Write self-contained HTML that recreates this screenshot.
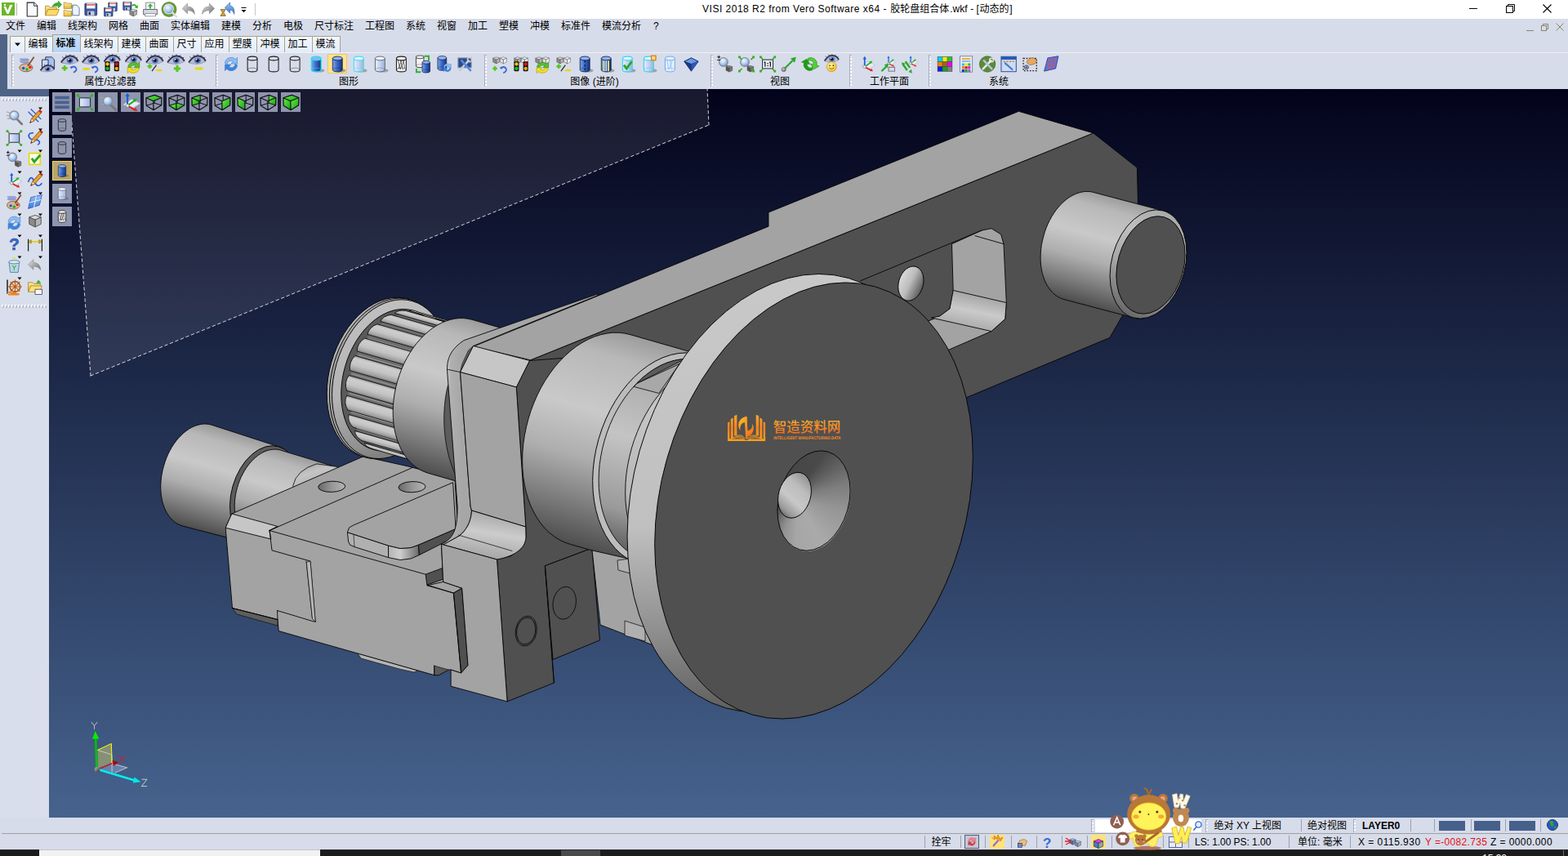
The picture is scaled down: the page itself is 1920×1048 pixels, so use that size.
<!DOCTYPE html>
<html lang="en"><head><meta charset="utf-8"><title>VISI 2018 R2</title>
<style>
*{box-sizing:border-box;margin:0;padding:0}
html,body{width:1920px;height:1048px;overflow:hidden;background:#d7dcea;font-family:"Liberation Sans","Noto Sans CJK SC",sans-serif;font-size:12px;color:#000}
.abs{position:absolute}
.lb{position:absolute;white-space:nowrap}
.lb span{vertical-align:top}
#title{position:absolute;left:0;top:0;width:1920px;height:23px;background:#fff}
#menu{position:absolute;left:0;top:23px;width:1920px;height:19px;background:#d7dcea}
#strip1{position:absolute;left:0;top:42px;width:9px;height:76px;background:#4f6386}
#strip2{position:absolute;left:0;top:109px;width:60px;height:9px;background:#4f6386}
#tb{position:absolute;left:9px;top:42px;width:1911px;height:67px;background:#d7dcea}
#view{position:absolute;left:60px;top:109px;width:1860px;height:892px;background:linear-gradient(#03031b,#46638e);overflow:hidden}
#left{position:absolute;left:0;top:118px;width:60px;height:883px;background:#d9deec}
#status{position:absolute;left:0;top:1001px;width:1920px;height:39px;background:#d7dcea}
#task{position:absolute;left:0;top:1040px;width:1920px;height:8px;background:#1c1c1c;overflow:hidden}

</style></head><body>
<div id="title"></div>
<div id="menu"></div>
<div id="tb"></div>
<div id="strip1"></div><div id="strip2"></div>
<div id="left"></div>
<div id="view"><svg id="model" class="abs" style="left:-60px;top:-109px" width="1920" height="1048" viewBox="0 0 1920 1048"><defs><linearGradient id="lg1" gradientUnits="userSpaceOnUse" x1="299.9" y1="533.4" x2="265.1" y2="654.8"><stop offset="0" stop-color="#9c9c9c"/><stop offset="0.12" stop-color="#b8b8b8"/><stop offset="0.38" stop-color="#c9c9c9"/><stop offset="0.6" stop-color="#aeaeae"/><stop offset="0.82" stop-color="#7a7a7a"/><stop offset="1" stop-color="#4e4e4e"/></linearGradient><linearGradient id="lg2" gradientUnits="userSpaceOnUse" x1="378.7" y1="561.8" x2="346.7" y2="673.3"><stop offset="0" stop-color="#9c9c9c"/><stop offset="0.12" stop-color="#b8b8b8"/><stop offset="0.38" stop-color="#c9c9c9"/><stop offset="0.6" stop-color="#aeaeae"/><stop offset="0.82" stop-color="#7a7a7a"/><stop offset="1" stop-color="#4e4e4e"/></linearGradient><linearGradient id="lg3" gradientUnits="userSpaceOnUse" x1="375.0" y1="568.0" x2="385.0" y2="600.0"><stop offset="0" stop-color="#a8a8a8"/><stop offset="0.35" stop-color="#c4c4c4"/><stop offset="1" stop-color="#b0b0b0"/></linearGradient><linearGradient id="lg4" gradientUnits="userSpaceOnUse" x1="390.2" y1="595.8" x2="422.2" y2="595.8"><stop offset="0" stop-color="#6a6a6a"/><stop offset="0.5" stop-color="#969696"/><stop offset="1" stop-color="#b4b4b4"/></linearGradient><linearGradient id="lg5" gradientUnits="userSpaceOnUse" x1="488.5" y1="596.2" x2="520.5" y2="596.2"><stop offset="0" stop-color="#6a6a6a"/><stop offset="0.5" stop-color="#969696"/><stop offset="1" stop-color="#b4b4b4"/></linearGradient><linearGradient id="lg6" gradientUnits="userSpaceOnUse" x1="475.0" y1="675.0" x2="513.0" y2="675.0"><stop offset="0" stop-color="#b4b4b4"/><stop offset="0.4" stop-color="#cdcdcd"/><stop offset="1" stop-color="#6a6a6a"/></linearGradient><linearGradient id="lg7" gradientUnits="userSpaceOnUse" x1="400.0" y1="400.0" x2="520.0" y2="560.0"><stop offset="0" stop-color="#b8b8b8"/><stop offset="0.5" stop-color="#a8a8a8"/><stop offset="1" stop-color="#6c6c6c"/></linearGradient><linearGradient id="lg8" gradientUnits="userSpaceOnUse" x1="410.0" y1="390.0" x2="520.0" y2="570.0"><stop offset="0" stop-color="#c0c0c0"/><stop offset="0.5" stop-color="#b4b4b4"/><stop offset="0.8" stop-color="#909090"/><stop offset="1" stop-color="#6a6a6a"/></linearGradient><linearGradient id="lg9" gradientUnits="userSpaceOnUse" x1="505.4" y1="380.1" x2="505.0" y2="381.5"><stop offset="0" stop-color="#a0a0a0"/><stop offset="0.15" stop-color="#cecece"/><stop offset="0.55" stop-color="#c4c4c4"/><stop offset="0.85" stop-color="#a4a4a4"/><stop offset="1" stop-color="#808080"/></linearGradient><linearGradient id="lg10" gradientUnits="userSpaceOnUse" x1="490.2" y1="378.6" x2="488.4" y2="385.0"><stop offset="0" stop-color="#a0a0a0"/><stop offset="0.15" stop-color="#cecece"/><stop offset="0.55" stop-color="#c4c4c4"/><stop offset="0.85" stop-color="#a4a4a4"/><stop offset="1" stop-color="#808080"/></linearGradient><linearGradient id="lg11" gradientUnits="userSpaceOnUse" x1="472.2" y1="383.5" x2="469.0" y2="394.4"><stop offset="0" stop-color="#a0a0a0"/><stop offset="0.15" stop-color="#cecece"/><stop offset="0.55" stop-color="#c4c4c4"/><stop offset="0.85" stop-color="#a4a4a4"/><stop offset="1" stop-color="#808080"/></linearGradient><linearGradient id="lg12" gradientUnits="userSpaceOnUse" x1="454.9" y1="395.0" x2="450.7" y2="409.6"><stop offset="0" stop-color="#a0a0a0"/><stop offset="0.15" stop-color="#cecece"/><stop offset="0.55" stop-color="#c4c4c4"/><stop offset="0.85" stop-color="#a4a4a4"/><stop offset="1" stop-color="#808080"/></linearGradient><linearGradient id="lg13" gradientUnits="userSpaceOnUse" x1="439.7" y1="412.2" x2="434.8" y2="429.3"><stop offset="0" stop-color="#a0a0a0"/><stop offset="0.15" stop-color="#cecece"/><stop offset="0.55" stop-color="#c4c4c4"/><stop offset="0.85" stop-color="#a4a4a4"/><stop offset="1" stop-color="#808080"/></linearGradient><linearGradient id="lg14" gradientUnits="userSpaceOnUse" x1="427.8" y1="433.8" x2="422.6" y2="452.0"><stop offset="0" stop-color="#a0a0a0"/><stop offset="0.15" stop-color="#cecece"/><stop offset="0.55" stop-color="#c4c4c4"/><stop offset="0.85" stop-color="#a4a4a4"/><stop offset="1" stop-color="#808080"/></linearGradient><linearGradient id="lg15" gradientUnits="userSpaceOnUse" x1="420.3" y1="457.9" x2="415.2" y2="475.7"><stop offset="0" stop-color="#a0a0a0"/><stop offset="0.15" stop-color="#cecece"/><stop offset="0.55" stop-color="#c4c4c4"/><stop offset="0.85" stop-color="#a4a4a4"/><stop offset="1" stop-color="#808080"/></linearGradient><linearGradient id="lg16" gradientUnits="userSpaceOnUse" x1="417.7" y1="482.6" x2="413.2" y2="498.5"><stop offset="0" stop-color="#a0a0a0"/><stop offset="0.15" stop-color="#cecece"/><stop offset="0.55" stop-color="#c4c4c4"/><stop offset="0.85" stop-color="#a4a4a4"/><stop offset="1" stop-color="#808080"/></linearGradient><linearGradient id="lg17" gradientUnits="userSpaceOnUse" x1="420.3" y1="505.8" x2="416.6" y2="518.7"><stop offset="0" stop-color="#a0a0a0"/><stop offset="0.15" stop-color="#cecece"/><stop offset="0.55" stop-color="#c4c4c4"/><stop offset="0.85" stop-color="#a4a4a4"/><stop offset="1" stop-color="#808080"/></linearGradient><linearGradient id="lg18" gradientUnits="userSpaceOnUse" x1="427.8" y1="525.8" x2="425.4" y2="534.5"><stop offset="0" stop-color="#a0a0a0"/><stop offset="0.15" stop-color="#cecece"/><stop offset="0.55" stop-color="#c4c4c4"/><stop offset="0.85" stop-color="#a4a4a4"/><stop offset="1" stop-color="#808080"/></linearGradient><linearGradient id="lg19" gradientUnits="userSpaceOnUse" x1="439.7" y1="540.8" x2="438.6" y2="544.6"><stop offset="0" stop-color="#a0a0a0"/><stop offset="0.15" stop-color="#cecece"/><stop offset="0.55" stop-color="#c4c4c4"/><stop offset="0.85" stop-color="#a4a4a4"/><stop offset="1" stop-color="#808080"/></linearGradient><linearGradient id="lg20" gradientUnits="userSpaceOnUse" x1="622.4" y1="404.1" x2="568.6" y2="591.9"><stop offset="0" stop-color="#9c9c9c"/><stop offset="0.12" stop-color="#b8b8b8"/><stop offset="0.38" stop-color="#c9c9c9"/><stop offset="0.6" stop-color="#aeaeae"/><stop offset="0.82" stop-color="#7a7a7a"/><stop offset="1" stop-color="#4e4e4e"/></linearGradient><linearGradient id="lg21" gradientUnits="userSpaceOnUse" x1="1180.0" y1="360.0" x2="1172.0" y2="400.0"><stop offset="0" stop-color="#a8a8a8"/><stop offset="0.45" stop-color="#cacaca"/><stop offset="1" stop-color="#a8a8a8"/></linearGradient><linearGradient id="lg22" gradientUnits="userSpaceOnUse" x1="1101.0" y1="345.0" x2="1130.0" y2="350.0"><stop offset="0" stop-color="#d8d8d8"/><stop offset="0.45" stop-color="#bcbcbc"/><stop offset="1" stop-color="#5c5c5c"/></linearGradient><linearGradient id="lg23" gradientUnits="userSpaceOnUse" x1="1381.7" y1="246.7" x2="1345.3" y2="377.8"><stop offset="0" stop-color="#9c9c9c"/><stop offset="0.12" stop-color="#b8b8b8"/><stop offset="0.38" stop-color="#c9c9c9"/><stop offset="0.6" stop-color="#aeaeae"/><stop offset="0.82" stop-color="#7a7a7a"/><stop offset="1" stop-color="#4e4e4e"/></linearGradient><linearGradient id="lg24" gradientUnits="userSpaceOnUse" x1="1424.2" y1="258.0" x2="1387.8" y2="389.0"><stop offset="0" stop-color="#a8a8a8"/><stop offset="0.3" stop-color="#c0c0c0"/><stop offset="0.6" stop-color="#a8a8a8"/><stop offset="0.85" stop-color="#808080"/><stop offset="1" stop-color="#666666"/></linearGradient><linearGradient id="lg25" gradientUnits="userSpaceOnUse" x1="546.0" y1="440.0" x2="566.0" y2="440.0"><stop offset="0" stop-color="#d0d0d0"/><stop offset="0.3" stop-color="#b0b0b0"/><stop offset="1" stop-color="#a6a6a6"/></linearGradient><linearGradient id="lg26" gradientUnits="userSpaceOnUse" x1="600.0" y1="628.0" x2="592.0" y2="682.0"><stop offset="0" stop-color="#a8a8a8"/><stop offset="0.45" stop-color="#cccccc"/><stop offset="1" stop-color="#a6a6a6"/></linearGradient><linearGradient id="lg27" gradientUnits="userSpaceOnUse" x1="814.8" y1="422.0" x2="741.3" y2="678.7"><stop offset="0" stop-color="#9c9c9c"/><stop offset="0.12" stop-color="#b8b8b8"/><stop offset="0.38" stop-color="#c9c9c9"/><stop offset="0.6" stop-color="#aeaeae"/><stop offset="0.82" stop-color="#7a7a7a"/><stop offset="1" stop-color="#4e4e4e"/></linearGradient><linearGradient id="lg28" gradientUnits="userSpaceOnUse" x1="879.1" y1="447.7" x2="809.4" y2="690.9"><stop offset="0" stop-color="#8c8c8c"/><stop offset="0.2" stop-color="#b0b0b0"/><stop offset="0.45" stop-color="#c4c4c4"/><stop offset="0.8" stop-color="#9a9a9a"/><stop offset="1" stop-color="#5a5a5a"/></linearGradient><linearGradient id="lg29" gradientUnits="userSpaceOnUse" x1="923.3" y1="447.4" x2="846.7" y2="714.6"><stop offset="0" stop-color="#a8a8a8"/><stop offset="0.3" stop-color="#c6c6c6"/><stop offset="0.7" stop-color="#b8b8b8"/><stop offset="1" stop-color="#6a6a6a"/></linearGradient><linearGradient id="lg30" gradientUnits="userSpaceOnUse" x1="800.0" y1="400.0" x2="960.0" y2="880.0"><stop offset="0" stop-color="#c8c8c8"/><stop offset="0.55" stop-color="#c0c0c0"/><stop offset="0.8" stop-color="#909090"/><stop offset="1" stop-color="#606060"/></linearGradient><linearGradient id="lg31" gradientUnits="userSpaceOnUse" x1="988.0" y1="582.0" x2="962.0" y2="634.0"><stop offset="0" stop-color="#8e8e8e"/><stop offset="0.3" stop-color="#bcbcbc"/><stop offset="0.6" stop-color="#c8c8c8"/><stop offset="0.85" stop-color="#9a9a9a"/><stop offset="1" stop-color="#5e5e5e"/></linearGradient><linearGradient id="lg32" gradientUnits="userSpaceOnUse" x1="0.0" y1="508.0" x2="0.0" y2="540.0"><stop offset="0" stop-color="#f9a825"/><stop offset="0.5" stop-color="#f58220"/><stop offset="1" stop-color="#f9a01e"/></linearGradient><linearGradient id="lg33" gradientUnits="userSpaceOnUse" x1="903.0" y1="512.0" x2="925.0" y2="534.0"><stop offset="0" stop-color="#fbb829"/><stop offset="0.5" stop-color="#f7931e"/><stop offset="1" stop-color="#f26a1c"/></linearGradient><linearGradient id="lg34" gradientUnits="userSpaceOnUse" x1="116.5" y1="940.0" x2="121.5" y2="945.0"><stop offset="0" stop-color="#a8a8a8"/><stop offset="1" stop-color="#3c3c3c"/></linearGradient></defs><polygon points="111.0,460.0 868.0,153.0 866.0,100.0 84.0,100.0" fill="#ffffff" stroke="none" stroke-width="0.9" stroke-linejoin="round" fill-opacity="0.085"/>
<polyline points="111.0,460.0 868.0,153.0" fill="none" stroke="#e8e8e8" stroke-width="0.9" stroke-linejoin="round" stroke-linecap="round" stroke-dasharray="3.5 3.5"/>
<polyline points="868.0,153.0 866.0,108.0" fill="none" stroke="#e8e8e8" stroke-width="0.9" stroke-linejoin="round" stroke-linecap="round" stroke-dasharray="3.5 3.5"/>
<polyline points="111.0,460.0 84.7,108.0" fill="none" stroke="#e8e8e8" stroke-width="0.9" stroke-linejoin="round" stroke-linecap="round" stroke-dasharray="3.5 3.5"/>
<polygon points="258.8,520.1 255.5,519.4 252.2,519.0 248.8,519.1 245.4,519.5 241.9,520.4 238.4,521.6 234.9,523.1 231.5,525.1 228.2,527.4 224.9,530.0 221.7,533.0 218.6,536.2 215.7,539.7 212.9,543.5 210.3,547.6 207.9,551.8 205.7,556.2 203.7,560.8 202.0,565.6 200.5,570.4 199.2,575.3 198.2,580.2 197.4,585.1 197.0,590.1 196.7,594.9 196.8,599.7 197.2,604.4 197.8,609.0 198.6,613.4 199.8,617.6 201.2,621.5 202.8,625.2 204.7,628.7 206.8,631.9 209.1,634.7 211.6,637.3 214.3,639.5 217.1,641.3 220.1,642.8 223.2,643.9 307.0,665.6 310.1,666.3 313.3,666.6 316.5,666.6 319.8,666.1 323.2,665.4 326.5,664.2 329.8,662.7 333.1,660.8 336.3,658.6 339.5,656.1 342.5,653.3 345.5,650.1 348.3,646.8 350.9,643.1 353.4,639.2 355.7,635.2 357.9,630.9 359.8,626.5 361.5,622.0 362.9,617.4 364.1,612.7 365.1,607.9 365.8,603.2 366.3,598.5 366.5,593.8 366.4,589.2 366.1,584.7 365.5,580.3 364.7,576.1 363.6,572.1 362.2,568.3 360.7,564.7 358.9,561.4 356.8,558.3 354.6,555.6 352.2,553.1 349.6,551.0 346.9,549.3 344.0,547.9 341.0,546.8" fill="url(#lg1)" stroke="#050505" stroke-width="0.9" stroke-linejoin="round" />
<ellipse cx="324.0" cy="606.2" rx="40.5" ry="61.8" transform="rotate(16 324.0 606.2)" fill="#5c5c5c" stroke="#050505" stroke-width="0.9" />
<polygon points="343.5,551.1 340.6,550.4 337.6,550.1 334.5,550.2 331.4,550.6 328.2,551.3 325.0,552.4 321.9,553.8 318.8,555.6 315.7,557.7 312.8,560.1 309.9,562.7 307.1,565.7 304.4,568.9 301.9,572.4 299.5,576.0 297.4,579.9 295.3,583.9 293.5,588.1 291.9,592.4 290.6,596.7 289.4,601.2 288.5,605.7 287.8,610.2 287.4,614.6 287.2,619.1 287.3,623.4 287.6,627.7 288.1,631.8 288.9,635.8 290.0,639.6 291.2,643.2 292.7,646.6 294.4,649.7 296.3,652.6 298.4,655.2 300.7,657.5 303.1,659.5 305.7,661.2 308.4,662.5 311.3,663.5 382.2,683.1 385.0,683.7 388.0,684.0 391.0,684.0 394.1,683.6 397.2,682.8 400.3,681.8 403.4,680.4 406.5,678.6 409.5,676.6 412.4,674.2 415.2,671.6 418.0,668.7 420.6,665.5 423.1,662.1 425.4,658.5 427.5,654.8 429.5,650.8 431.3,646.7 432.8,642.5 434.2,638.2 435.3,633.8 436.2,629.4 436.9,625.0 437.3,620.6 437.5,616.2 437.5,612.0 437.1,607.8 436.6,603.7 435.8,599.8 434.8,596.1 433.6,592.5 432.1,589.2 430.4,586.1 428.6,583.3 426.5,580.7 424.3,578.4 421.9,576.5 419.3,574.8 416.6,573.5 413.8,572.5" fill="url(#lg2)" stroke="#050505" stroke-width="0.9" stroke-linejoin="round" />
<path d="M358.7,594.5 Q363,575 387.9,567.9 L411.9,571.3 L425,580 L362,598 Z" fill="url(#lg3)" stroke="#050505" stroke-width="0.8" stroke-linejoin="round" stroke-linecap="round" />
<polygon points="284.5,744.5 290.0,752.0 340.0,766.0 340.0,758.5" fill="#5e5e5e" stroke="#050505" stroke-width="0.6" stroke-linejoin="round" />
<polygon points="438.0,800.0 442.0,806.0 489.0,819.0 507.0,823.0 512.0,821.0" fill="#b4b4b4" stroke="#050505" stroke-width="0.6" stroke-linejoin="round" />
<polygon points="283.8,629.0 445.0,558.8 500.0,571.0 557.0,586.0 561.0,652.0 542.5,667.0 540.5,666.3 542.7,712.4 565.7,720.1 573.0,814.5 564.6,824.0 552.1,820.0 549.3,820.0 537.2,826.6 531.7,826.6 341.2,772.5 340.0,758.5 284.5,744.5 276.2,646.2" fill="#a3a3a3" stroke="#050505" stroke-width="0.9" stroke-linejoin="round" />
<polygon points="283.8,629.0 340.0,644.5 330.0,649.5 331.8,660.0 276.2,646.2" fill="#c6c6c6" stroke="#050505" stroke-width="0.9" stroke-linejoin="round" />
<polyline points="330.0,649.5 505.0,572.5" fill="none" stroke="#050505" stroke-width="0.9" stroke-linejoin="round" stroke-linecap="round" />
<polyline points="340.0,644.5 330.0,649.5" fill="none" stroke="#050505" stroke-width="0.9" stroke-linejoin="round" stroke-linecap="round" />
<polyline points="330.0,649.5 521.1,703.2" fill="none" stroke="#050505" stroke-width="0.9" stroke-linejoin="round" stroke-linecap="round" />
<polyline points="330.0,649.5 333.0,673.8 380.0,687.0 386.2,761.2" fill="none" stroke="#050505" stroke-width="0.9" stroke-linejoin="round" stroke-linecap="round" />
<polyline points="375.0,687.0 382.5,757.5 386.2,761.2" fill="none" stroke="#050505" stroke-width="0.9" stroke-linejoin="round" stroke-linecap="round" />
<polyline points="339.5,747.5 385.0,761.2" fill="none" stroke="#050505" stroke-width="0.9" stroke-linejoin="round" stroke-linecap="round" />
<polyline points="339.5,747.5 340.0,758.5" fill="none" stroke="#050505" stroke-width="0.9" stroke-linejoin="round" stroke-linecap="round" />
<polygon points="375.3,688.5 380.0,687.0 386.2,761.2 382.5,757.5" fill="#b8b8b8" stroke="#050505" stroke-width="0.6" stroke-linejoin="round" />
<polyline points="284.5,744.5 340.0,758.5" fill="none" stroke="#050505" stroke-width="0.9" stroke-linejoin="round" stroke-linecap="round" />
<ellipse cx="406.2" cy="595.8" rx="16.5" ry="6.6" transform="rotate(-2 406.2 595.8)" fill="url(#lg4)" stroke="#050505" stroke-width="0.9"/>
<ellipse cx="504.5" cy="596.2" rx="16.5" ry="6.6" transform="rotate(-2 504.5 596.2)" fill="url(#lg5)" stroke="#050505" stroke-width="0.9"/>
<polygon points="425.4,651.7 475.6,668.0 475.6,682.6 434.0,669.5 428.5,667.0 426.6,663.0" fill="#b0b0b0" stroke="#050505" stroke-width="0.9" stroke-linejoin="round" />
<polygon points="475.6,668.0 490.0,671.5 503.0,670.5 512.5,667.1 513.4,679.5 503.0,684.0 490.0,685.5 475.6,682.6" fill="url(#lg6)" stroke="#050505" stroke-width="0.9" stroke-linejoin="round" />
<polygon points="512.5,667.1 558.1,647.4 561.5,655.1 513.4,679.5" fill="#505050" stroke="#050505" stroke-width="0.9" stroke-linejoin="round" />
<polyline points="433.0,655.0 434.0,669.5" fill="none" stroke="#050505" stroke-width="0.6" stroke-linejoin="round" stroke-linecap="round" />
<polygon points="554.6,590.7 432.6,643.1 427.5,646.0 425.4,651.7 475.6,668.0 490.0,671.5 503.0,670.5 512.5,667.1 558.1,647.4" fill="#a3a3a3" stroke="#050505" stroke-width="0.9" stroke-linejoin="round" />
<polygon points="521.1,703.2 541.8,695.5 542.6,709.2 522.9,716.1" fill="#505050" stroke="#050505" stroke-width="0.9" stroke-linejoin="round" />
<polygon points="522.9,716.8 542.7,712.4 565.7,720.1 555.4,726.1" fill="#a3a3a3" stroke="#050505" stroke-width="0.9" stroke-linejoin="round" />
<polygon points="555.4,726.1 565.7,720.1 573.0,814.5 564.6,824.0" fill="#505050" stroke="#050505" stroke-width="0.9" stroke-linejoin="round" />
<polyline points="555.4,726.1 564.6,824.0" fill="none" stroke="#050505" stroke-width="0.9" stroke-linejoin="round" stroke-linecap="round" />
<polyline points="522.9,716.1 555.4,726.1" fill="none" stroke="#050505" stroke-width="0.9" stroke-linejoin="round" stroke-linecap="round" />
<polygon points="531.7,815.0 549.3,820.0 537.2,826.6 531.7,826.6" fill="#5a5a5a" stroke="#050505" stroke-width="0.6" stroke-linejoin="round" />
<polyline points="531.7,815.0 531.7,826.6" fill="none" stroke="#050505" stroke-width="0.9" stroke-linejoin="round" stroke-linecap="round" />
<ellipse cx="472.0" cy="462.6" rx="68.9" ry="100.4" transform="rotate(16 472.0 462.6)" fill="url(#lg7)" stroke="#050505" stroke-width="0.9" />
<ellipse cx="475.2" cy="463.5" rx="68.9" ry="100.4" transform="rotate(16 475.2 463.5)" fill="#a4a4a4" stroke="#050505" stroke-width="0.9" />
<ellipse cx="477.6" cy="464.2" rx="68.2" ry="99.4" transform="rotate(16 477.6 464.2)" fill="url(#lg8)" stroke="#050505" stroke-width="0.9" />
<ellipse cx="481.0" cy="465.2" rx="60.7" ry="88.5" transform="rotate(16 481.0 465.2)" fill="#5a5a5a" stroke="#050505" stroke-width="0.9" />
<polygon points="508.8,386.3 504.4,385.3 499.9,384.8 495.3,384.8 490.7,385.3 486.0,386.4 481.3,387.9 476.7,389.9 472.1,392.3 467.5,395.3 463.1,398.6 458.9,402.4 454.8,406.6 450.9,411.2 447.2,416.1 443.7,421.3 440.6,426.7 437.6,432.5 435.0,438.4 432.7,444.5 430.7,450.8 429.1,457.1 427.8,463.5 426.9,469.9 426.3,476.3 426.1,482.7 426.3,488.9 426.8,495.0 427.7,501.0 429.0,506.7 430.6,512.2 432.5,517.3 434.8,522.2 437.4,526.7 440.3,530.9 443.5,534.7 446.9,538.0 450.6,540.9 454.5,543.4 458.5,545.3 462.8,546.8 540.7,569.2 536.4,567.7 532.3,565.7 528.4,563.2 524.8,560.3 521.3,557.0 518.2,553.2 515.3,549.1 512.7,544.5 510.4,539.7 508.5,534.5 506.9,529.0 505.6,523.3 504.7,517.4 504.2,511.3 504.0,505.0 504.2,498.7 504.8,492.3 505.7,485.8 507.0,479.4 508.6,473.1 510.6,466.8 512.9,460.7 515.5,454.8 518.4,449.1 521.6,443.6 525.1,438.4 528.7,433.5 532.7,428.9 536.7,424.8 541.0,421.0 545.4,417.6 549.9,414.7 554.5,412.2 559.2,410.2 563.9,408.7 568.5,407.7 573.2,407.2 577.8,407.1 582.3,407.6 586.7,408.6" fill="#6e6e6e" stroke="none" stroke-width="0.9" stroke-linejoin="round" />
<path d="M512.1,382.0 Q503.8,378.5 501.4,380.4 L577.3,402.2 L588.1,403.8 Z" fill="url(#lg9)" stroke="#050505" stroke-width="0.8" stroke-linejoin="round" stroke-linecap="round" />
<polyline points="500.6,383.9 574.6,405.1" fill="none" stroke="#b0b0b0" stroke-width="0.7" stroke-linejoin="round" stroke-linecap="round" />
<path d="M497.0,380.5 Q486.9,379.1 483.4,383.6 L559.3,405.3 L572.9,402.3 Z" fill="url(#lg10)" stroke="#050505" stroke-width="0.8" stroke-linejoin="round" stroke-linecap="round" />
<polyline points="483.1,387.9 557.2,409.1" fill="none" stroke="#b0b0b0" stroke-width="0.7" stroke-linejoin="round" stroke-linecap="round" />
<path d="M478.9,385.4 Q468.6,386.7 465.8,393.5 L541.7,415.3 L554.8,407.2 Z" fill="url(#lg11)" stroke="#050505" stroke-width="0.8" stroke-linejoin="round" stroke-linecap="round" />
<polyline points="466.3,398.3 540.3,419.5" fill="none" stroke="#b0b0b0" stroke-width="0.7" stroke-linejoin="round" stroke-linecap="round" />
<path d="M461.6,396.9 Q451.7,400.7 449.9,409.4 L525.9,431.2 L537.5,418.7 Z" fill="url(#lg12)" stroke="#050505" stroke-width="0.8" stroke-linejoin="round" stroke-linecap="round" />
<polyline points="451.3,414.4 525.3,435.6" fill="none" stroke="#b0b0b0" stroke-width="0.7" stroke-linejoin="round" stroke-linecap="round" />
<path d="M446.4,414.2 Q437.3,420.1 437.1,430.0 L513.1,451.8 L522.3,436.0 Z" fill="url(#lg13)" stroke="#050505" stroke-width="0.8" stroke-linejoin="round" stroke-linecap="round" />
<polyline points="439.4,434.8 513.4,456.0" fill="none" stroke="#b0b0b0" stroke-width="0.7" stroke-linejoin="round" stroke-linecap="round" />
<path d="M434.6,435.7 Q426.9,443.2 428.5,453.7 L504.4,475.4 L510.5,457.5 Z" fill="url(#lg14)" stroke="#050505" stroke-width="0.8" stroke-linejoin="round" stroke-linecap="round" />
<polyline points="431.6,457.8 505.6,479.1" fill="none" stroke="#b0b0b0" stroke-width="0.7" stroke-linejoin="round" stroke-linecap="round" />
<path d="M427.0,459.8 Q421.1,468.2 424.6,478.4 L500.6,500.2 L503.0,481.6 Z" fill="url(#lg15)" stroke="#050505" stroke-width="0.8" stroke-linejoin="round" stroke-linecap="round" />
<polyline points="428.6,481.7 502.6,503.0" fill="none" stroke="#b0b0b0" stroke-width="0.7" stroke-linejoin="round" stroke-linecap="round" />
<path d="M424.5,484.5 Q420.4,493.0 425.9,502.2 L501.9,524.0 L500.4,506.3 Z" fill="url(#lg16)" stroke="#050505" stroke-width="0.8" stroke-linejoin="round" stroke-linecap="round" />
<polyline points="430.5,504.5 504.5,525.7" fill="none" stroke="#b0b0b0" stroke-width="0.7" stroke-linejoin="round" stroke-linecap="round" />
<path d="M427.1,507.8 Q425.0,515.6 432.3,523.2 L508.2,544.9 L503.0,529.6 Z" fill="url(#lg17)" stroke="#050505" stroke-width="0.8" stroke-linejoin="round" stroke-linecap="round" />
<polyline points="437.2,524.2 511.2,545.4" fill="none" stroke="#b0b0b0" stroke-width="0.7" stroke-linejoin="round" stroke-linecap="round" />
<path d="M434.6,527.7 Q434.4,534.2 443.1,539.6 L519.0,561.3 L510.5,549.5 Z" fill="url(#lg18)" stroke="#050505" stroke-width="0.8" stroke-linejoin="round" stroke-linecap="round" />
<polyline points="448.2,539.4 522.2,560.6" fill="none" stroke="#b0b0b0" stroke-width="0.7" stroke-linejoin="round" stroke-linecap="round" />
<path d="M446.4,542.8 Q447.8,547.3 457.6,550.1 L533.5,571.8 L522.4,564.6 Z" fill="url(#lg19)" stroke="#050505" stroke-width="0.8" stroke-linejoin="round" stroke-linecap="round" />
<polyline points="462.6,548.7 536.6,569.9" fill="none" stroke="#b0b0b0" stroke-width="0.7" stroke-linejoin="round" stroke-linecap="round" />
<polygon points="577.9,391.3 572.8,390.2 567.5,389.6 562.1,389.6 556.7,390.2 551.2,391.4 545.7,393.2 540.3,395.5 534.9,398.4 529.6,401.8 524.5,405.8 519.5,410.2 514.7,415.1 510.1,420.4 505.8,426.2 501.8,432.2 498.0,438.7 494.6,445.4 491.6,452.3 488.9,459.5 486.6,466.8 484.7,474.2 483.2,481.7 482.1,489.2 481.4,496.7 481.2,504.1 481.4,511.4 482.0,518.6 483.0,525.5 484.5,532.2 486.4,538.6 488.7,544.7 491.3,550.4 494.4,555.7 497.8,560.5 501.5,565.0 505.5,568.9 509.8,572.3 514.3,575.1 519.1,577.4 524.1,579.2 613.1,604.7 618.2,605.9 623.5,606.4 628.9,606.4 634.3,605.8 639.8,604.6 645.3,602.8 650.7,600.5 656.1,597.6 661.4,594.2 666.5,590.2 671.5,585.8 676.3,580.9 680.9,575.6 685.2,569.9 689.2,563.8 693.0,557.4 696.4,550.7 699.4,543.7 702.1,536.6 704.4,529.2 706.3,521.8 707.8,514.3 708.9,506.8 709.6,499.3 709.8,491.9 709.6,484.6 709.0,477.5 708.0,470.5 706.5,463.8 704.6,457.4 702.3,451.4 699.7,445.7 696.6,440.4 693.2,435.5 689.5,431.1 685.5,427.2 681.2,423.8 676.7,420.9 671.9,418.6 666.9,416.9" fill="url(#lg20)" stroke="#050505" stroke-width="0.9" stroke-linejoin="round" />
<path d="M548.6,471.7 C541,500 541,545 557.8,581.6 L566,585 L560,470 Z" fill="#5c5c5c" stroke="#050505" stroke-width="0.8" stroke-linejoin="round" stroke-linecap="round" />
<polygon points="649.7,440.8 1338.8,162.9 1392.4,205.3 1396.0,349.0 1358.9,413.4 1100.0,521.6 900.0,600.0 642.0,642.0 631.0,475.0" fill="#505050" stroke="#050505" stroke-width="0.9" stroke-linejoin="round" />
<polygon points="1247.4,136.3 1338.8,162.9 649.7,440.8 579.5,424.3 941.0,277.2 941.0,260.0" fill="#a3a3a3" stroke="#050505" stroke-width="0.9" stroke-linejoin="round" />
<polygon points="1165.5,298.7 1202.3,282.0 1214.0,279.7 1225.7,287.0 1229.0,298.7 1232.3,370.5 1230.7,390.6 1214.0,405.6 1163.9,427.3 1100.0,455.0 1100.0,405.0 1138.8,392.2 1150.5,387.2 1163.0,378.0 1167.2,355.5" fill="#a3a3a3" stroke="#050505" stroke-width="0.9" stroke-linejoin="round" />
<polygon points="1167.2,355.5 1232.3,370.5 1230.7,390.6 1214.0,405.6 1140.5,389.0 1150.5,387.2 1163.0,378.0" fill="url(#lg21)" stroke="#050505" stroke-width="0.9" stroke-linejoin="round" />
<polyline points="1194.0,288.7 1229.0,298.7" fill="none" stroke="#050505" stroke-width="0.9" stroke-linejoin="round" stroke-linecap="round" />
<polyline points="1053.6,343.8 1202.3,282.0" fill="none" stroke="#050505" stroke-width="0.9" stroke-linejoin="round" stroke-linecap="round" />
<ellipse cx="1115.4" cy="347.1" rx="15.0" ry="21.5" transform="rotate(16 1115.4 347.1)" fill="url(#lg22)" stroke="#050505" stroke-width="0.9" />
<polygon points="1339.2,235.5 1335.7,234.7 1332.2,234.4 1328.6,234.5 1324.9,235.0 1321.2,235.9 1317.6,237.2 1313.9,238.9 1310.3,240.9 1306.7,243.4 1303.3,246.2 1299.9,249.3 1296.7,252.8 1293.6,256.5 1290.7,260.6 1288.0,264.8 1285.5,269.3 1283.2,274.0 1281.1,278.9 1279.3,283.9 1277.8,289.0 1276.5,294.2 1275.4,299.4 1274.7,304.6 1274.3,309.8 1274.1,315.0 1274.2,320.1 1274.6,325.0 1275.3,329.8 1276.3,334.4 1277.6,338.9 1279.1,343.0 1280.9,347.0 1282.9,350.6 1285.2,353.9 1287.7,356.9 1290.4,359.6 1293.2,361.9 1296.3,363.8 1299.5,365.4 1302.8,366.5 1387.8,389.0 1391.3,389.8 1394.8,390.1 1398.4,390.0 1402.1,389.5 1405.8,388.6 1409.4,387.3 1413.1,385.6 1416.7,383.6 1420.3,381.1 1423.7,378.3 1427.1,375.2 1430.3,371.7 1433.4,368.0 1436.3,363.9 1439.0,359.7 1441.5,355.2 1443.8,350.5 1445.9,345.6 1447.7,340.6 1449.2,335.5 1450.5,330.3 1451.6,325.1 1452.3,319.9 1452.7,314.7 1452.9,309.5 1452.8,304.4 1452.4,299.5 1451.7,294.7 1450.7,290.1 1449.4,285.6 1447.9,281.5 1446.1,277.5 1444.1,273.9 1441.8,270.6 1439.3,267.6 1436.6,264.9 1433.8,262.6 1430.7,260.7 1427.5,259.1 1424.2,258.0" fill="url(#lg23)" stroke="#050505" stroke-width="0.9" stroke-linejoin="round" />
<ellipse cx="1406.0" cy="323.5" rx="44.9" ry="68.0" transform="rotate(15.5 1406.0 323.5)" fill="url(#lg24)" stroke="#050505" stroke-width="0.9" />
<ellipse cx="1409.0" cy="324.5" rx="40.3" ry="61.0" transform="rotate(15.5 1409.0 324.5)" fill="#505050" stroke="#050505" stroke-width="0.9" />
<polygon points="648.5,441.5 632.3,474.0 643.8,645.0 644.0,658.0 638.0,672.0 625.0,681.0 608.5,685.0 621.1,858.9 678.4,836.0 667.4,692.7 721.2,672.5 800.0,640.0 800.0,430.0" fill="#505050" stroke="#050505" stroke-width="0.9" stroke-linejoin="round" />
<polygon points="667.4,692.7 721.2,672.5 725.0,672.5 734.5,783.8 677.0,807.5" fill="#505050" stroke="#050505" stroke-width="0.9" stroke-linejoin="round" />
<polyline points="667.4,692.7 678.4,836.0" fill="none" stroke="#050505" stroke-width="0.9" stroke-linejoin="round" stroke-linecap="round" />
<ellipse cx="644.2" cy="772.5" rx="12.9" ry="18.5" transform="rotate(10 644.2 772.5)" fill="none" stroke="#050505" stroke-width="0.8" />
<ellipse cx="644.2" cy="772.5" rx="11.5" ry="16.5" transform="rotate(10 644.2 772.5)" fill="none" stroke="#050505" stroke-width="0.8" />
<ellipse cx="691.2" cy="738.2" rx="14.0" ry="20.0" transform="rotate(10 691.2 738.2)" fill="none" stroke="#050505" stroke-width="0.8" />
<path d="M547.5,452.2 C547.5,440 551,428 568.1,416.7 L733,359.6 L731,362 L579.6,423.5 L563.5,455.6 L576.1,620 L577.5,625 C577,640 570,650 562.5,656 L542.5,667 L540.5,666.3 C553,660 560.5,652 560.1,620.1 Z" fill="url(#lg25)" stroke="#050505" stroke-width="0.9" stroke-linejoin="round" stroke-linecap="round" />
<polyline points="547.5,452.2 563.5,455.6" fill="none" stroke="#050505" stroke-width="0.8" stroke-linejoin="round" stroke-linecap="round" />
<polygon points="563.5,455.6 579.6,423.5 573.5,429.0 565.8,446.0" fill="#606060" stroke="#050505" stroke-width="0.6" stroke-linejoin="round" />
<polygon points="579.6,423.5 648.5,441.5 632.3,474.0 563.5,455.6" fill="#c6c6c6" stroke="#050505" stroke-width="0.9" stroke-linejoin="round" />
<polygon points="563.5,455.6 632.3,474.0 643.8,645.0 577.5,625.0 576.1,620.0" fill="#a3a3a3" stroke="#050505" stroke-width="0.9" stroke-linejoin="round" />
<path d="M577.5,625 L643.75,645 L644,658 C643,672 630,681 608.5,685 L540.5,666.3 L542.5,667 L562.5,656 C570,650 577,640 577.5,625 Z" fill="url(#lg26)" stroke="#050505" stroke-width="0.9" stroke-linejoin="round" stroke-linecap="round" />
<polyline points="561.5,655.1 627.0,674.5" fill="none" stroke="#050505" stroke-width="0.7" stroke-linejoin="round" stroke-linecap="round" />
<polygon points="540.5,666.3 608.5,685.0 621.1,858.9 552.1,840.2 552.1,820.0 564.6,824.0 573.0,814.5 565.7,720.1 542.7,712.4" fill="#a3a3a3" stroke="#050505" stroke-width="0.9" stroke-linejoin="round" />
<polygon points="771.8,409.7 764.8,408.1 757.6,407.3 750.2,407.3 742.8,408.2 735.3,409.8 727.8,412.2 720.4,415.4 713.0,419.4 705.8,424.0 698.8,429.4 692.0,435.5 685.4,442.2 679.2,449.4 673.3,457.3 667.7,465.6 662.6,474.4 658.0,483.5 653.8,493.0 650.1,502.8 647.0,512.8 644.4,522.9 642.3,533.2 640.8,543.4 639.9,553.7 639.6,563.8 639.9,573.8 640.7,583.5 642.2,593.0 644.2,602.2 646.7,610.9 649.8,619.2 653.5,627.0 657.6,634.2 662.2,640.9 667.3,646.9 672.8,652.3 678.7,656.9 684.9,660.8 691.4,664.0 698.2,666.3 784.3,691.0 791.3,692.6 798.5,693.4 805.9,693.4 813.3,692.6 820.8,690.9 828.3,688.5 835.7,685.3 843.1,681.4 850.3,676.7 857.3,671.3 864.1,665.2 870.7,658.6 876.9,651.3 882.8,643.5 888.4,635.1 893.5,626.4 898.1,617.2 902.3,607.7 906.0,597.9 909.1,587.9 911.7,577.8 913.8,567.6 915.3,557.3 916.2,547.1 916.5,536.9 916.2,526.9 915.4,517.2 913.9,507.7 911.9,498.6 909.4,489.8 906.3,481.5 902.6,473.7 898.5,466.5 893.9,459.8 888.8,453.8 883.3,448.5 877.4,443.8 871.2,439.9 864.7,436.8 857.9,434.4" fill="url(#lg27)" stroke="#050505" stroke-width="0.9" stroke-linejoin="round" />
<ellipse cx="821.1" cy="562.7" rx="91.6" ry="133.5" transform="rotate(16 821.1 562.7)" fill="#bcbcbc" stroke="#050505" stroke-width="0.9" />
<polygon points="858.4,441.8 851.7,440.3 844.9,439.5 837.9,439.6 830.9,440.4 823.8,441.9 816.7,444.2 809.6,447.2 802.7,451.0 795.8,455.4 789.2,460.5 782.7,466.2 776.5,472.6 770.6,479.5 765.0,486.9 759.8,494.8 754.9,503.1 750.5,511.7 746.6,520.7 743.1,530.0 740.1,539.5 737.6,549.1 735.7,558.8 734.2,568.5 733.4,578.2 733.1,587.8 733.3,597.3 734.2,606.5 735.5,615.5 737.4,624.2 739.9,632.5 742.8,640.3 746.3,647.7 750.2,654.6 754.6,660.9 759.4,666.6 764.6,671.6 770.1,676.0 776.0,679.8 782.2,682.7 788.6,685.0 830.1,696.9 836.8,698.4 843.6,699.1 850.6,699.1 857.6,698.3 864.7,696.8 871.8,694.5 878.9,691.5 885.8,687.7 892.7,683.3 899.3,678.2 905.8,672.5 912.0,666.1 917.9,659.2 923.5,651.8 928.7,643.9 933.6,635.6 938.0,626.9 941.9,617.9 945.4,608.7 948.4,599.2 950.9,589.6 952.8,579.9 954.3,570.2 955.1,560.5 955.4,550.9 955.2,541.4 954.3,532.2 953.0,523.2 951.1,514.5 948.6,506.2 945.7,498.4 942.2,491.0 938.3,484.1 933.9,477.8 929.1,472.1 923.9,467.0 918.4,462.6 912.5,458.9 906.3,455.9 899.9,453.7" fill="url(#lg28)" stroke="#050505" stroke-width="0.9" stroke-linejoin="round" />
<polygon points="780.1,469.4 780.6,468.3 782.7,466.2 784.8,464.3 787.0,462.3 789.2,460.5 791.4,458.7 793.6,457.0 795.8,455.4 798.1,453.8 800.4,452.4 802.7,451.0 805.0,449.6 807.3,448.4 809.6,447.2 812.0,446.1 814.3,445.1 816.7,444.2 819.1,443.3 821.4,442.6 823.8,441.9 826.2,441.3 828.5,440.8 830.9,440.4 833.2,440.0 835.6,439.7 837.9,439.6 840.3,439.5 842.6,439.5 844.9,439.5 847.2,439.7 849.5,440.0 851.7,440.3 854.0,440.7 856.2,441.2 858.4,441.8 834.9,441.4" fill="#5c5c5c" stroke="#050505" stroke-width="0.8" stroke-linejoin="round" />
<polygon points="780.1,469.4 832.0,445.5 806.8,481.5 776.1,473.4" fill="#a8a8a8" stroke="#050505" stroke-width="0.8" stroke-linejoin="round" />
<polygon points="903.3,441.7 896.0,440.0 888.5,439.2 880.9,439.2 873.1,440.1 865.3,441.8 857.5,444.3 849.8,447.6 842.1,451.7 834.6,456.6 827.3,462.2 820.2,468.5 813.4,475.5 806.9,483.1 800.7,491.2 795.0,499.9 789.7,509.0 784.8,518.5 780.5,528.4 776.6,538.6 773.3,549.0 770.6,559.6 768.5,570.2 766.9,580.9 766.0,591.6 765.7,602.1 765.9,612.5 766.8,622.7 768.3,632.6 770.4,642.1 773.1,651.2 776.3,659.8 780.1,667.9 784.4,675.5 789.2,682.4 794.5,688.7 800.2,694.2 806.3,699.1 812.8,703.2 819.6,706.4 826.7,708.9 866.7,720.4 874.0,722.0 881.5,722.8 889.1,722.8 896.9,722.0 904.7,720.3 912.5,717.7 920.2,714.4 927.9,710.3 935.4,705.4 942.7,699.8 949.8,693.5 956.6,686.6 963.1,679.0 969.3,670.8 975.0,662.2 980.3,653.0 985.2,643.5 989.5,633.6 993.4,623.4 996.7,613.0 999.4,602.5 1001.5,591.8 1003.1,581.1 1004.0,570.5 1004.3,559.9 1004.1,549.5 1003.2,539.4 1001.7,529.5 999.6,520.0 996.9,510.9 993.7,502.2 989.9,494.1 985.6,486.6 980.8,479.6 975.5,473.4 969.8,467.8 963.7,463.0 957.2,458.9 950.4,455.6 943.3,453.1" fill="url(#lg29)" stroke="#050505" stroke-width="0.9" stroke-linejoin="round" />
<polygon points="725.0,673.8 768.8,683.8 900.0,700.0 900.0,800.0 800.0,790.0 735.0,765.0" fill="#a3a3a3" stroke="#050505" stroke-width="0.9" stroke-linejoin="round" />
<polygon points="756.0,686.0 771.0,684.0 772.0,702.0 757.0,698.0" fill="#b0b0b0" stroke="#050505" stroke-width="0.7" stroke-linejoin="round" />
<polygon points="765.0,760.0 790.0,768.0 790.0,785.0 765.0,778.0" fill="#b0b0b0" stroke="#050505" stroke-width="0.7" stroke-linejoin="round" />
<ellipse cx="963.7" cy="603.6" rx="187.8" ry="273.7" transform="rotate(16 963.7 603.6)" fill="url(#lg30)" stroke="#050505" stroke-width="0.9" />
<ellipse cx="996.5" cy="613.0" rx="187.0" ry="272.6" transform="rotate(16 996.5 613.0)" fill="#505050" stroke="#050505" stroke-width="0.9" />
<path d="M891.0,517.5 L893.4,516.2 L893.4,539.4 L891.0,539.4 Z M934.7,516.2 L937.1,517.5 L937.1,539.4 L934.7,539.4 Z M894.8,513.0 L897.7,511.6 L897.7,537.0 L894.8,537.0 Z M930.4,511.6 L933.3,513.0 L933.3,537.0 L930.4,537.0 Z M899.0,509.3 L902.4,507.8 L902.4,533.6 L899.0,533.6 Z M925.7,507.8 L929.1,509.3 L929.1,533.6 L925.7,533.6 Z " fill="url(#lg32)"/>
<path d="M891,537.6 L906,537.6 Q911,537 914,539 Q917,537 922,537.6 L937.1,537.6 L937.1,540 L891,540 Z" fill="url(#lg32)"/>
<path d="M893.5,537.8 Q905,533.5 910.5,538 M897.8,536 Q906,531.5 911.5,537.5 M902.4,533.6 Q908,531 912.5,537 M934.6,537.8 Q923,533.5 917.6,538 M930.3,536 Q922,531.5 916.6,537.5 M925.7,533.6 Q920,531 915.6,537" fill="none" stroke="url(#lg32)" stroke-width="0.9"/>
<path d="M914.6,509.8 C905,511 901.5,520 906.5,527.5 C905.5,521 908.5,517.5 912,517.3 L913.3,537.5 L915.8,537.5 L914.6,509.8 Z" fill="url(#lg33)"/>
<path d="M914.9,527.6 C919.5,527 922.3,523.5 920.6,518.6 C925,523.5 922.5,533 915.3,534.6 Z" fill="url(#lg33)"/>
<path d="M122.7,942.1 L137.2,934.8 L155.8,939.8 L140.8,946.2 Z" fill="#9ab0d8" fill-opacity="0.45"/>
<path d="M137.2,934.8 L155.8,939.8 L140.8,946.2" fill="none" stroke="#d8d8d8" stroke-width="0.8"/>
<path d="M119.5,918.3 L136.3,910.4 L137.2,933.9 L119.5,941 Z" fill="#b4b46a" fill-opacity="0.6"/>
<path d="M119.5,918.3 L136.7,924 L137.2,945.7" fill="none" stroke="#d8d8d8" stroke-width="0.8"/>
<path d="M119.5,918.3 L136.3,910.4 L137.2,933.9" fill="none" stroke="#ffff00" stroke-width="1"/>
<path d="M122.7,940.6 L139,933.9" stroke="#d81010" stroke-width="1.8" stroke-dasharray="2 0.8"/>
<path d="M145,933 L137.4,931 L139.4,937.8 Z" fill="#b00000"/>
<path d="M118.2,939 L117.2,904" stroke="#00c000" stroke-width="2.6"/>
<path d="M116.6,895.1 L113,904.8 L121.3,904.4 Z" fill="#00f000"/>
<path d="M121.8,942.5 L166,955.8" stroke="#00f0f0" stroke-width="2.6"/>
<path d="M172.6,957.2 L164.6,951.6 L162.8,958.6 Z" fill="#00e8e8"/>
<circle cx="119" cy="942.3" r="3.2" fill="url(#lg34)"/>
<path d="M111.9,884 L115.5,888.6 L119.2,884 M115.5,888.6 V892.8" fill="none" stroke="#d0d0d0" stroke-width="0.9"/>
<path d="M145,925 L153,934 M153,925 L145,934" fill="none" stroke="#f01010" stroke-width="0.9"/>
<path d="M173.5,954.2 H180 L173.3,962.6 H180" fill="none" stroke="#d8d8d8" stroke-width="0.9"/></svg><div class="abs" style="left:893.7px;top:441.6px;width:85.6px;height:124.8px;border-radius:50%;transform:rotate(16deg);background:conic-gradient(from -16deg at 21.7% 50.6%,#474747 0deg,#494949 34deg,#606060 54deg,#7e7e7e 78deg,#969696 108deg,#aaaaaa 150deg,#a6a6a6 178deg,#929292 197deg,#727272 212deg,#565656 226deg,#494949 245deg,#474747 360deg)"></div><svg class="abs" style="left:-60px;top:-109px" width="1920" height="1048" viewBox="0 0 1920 1048"><ellipse cx="996.5" cy="613.0" rx="42.8" ry="62.4" transform="rotate(16 996.5 613.0)" fill="none" stroke="#050505" stroke-width="0.9" />
<ellipse cx="973.0" cy="606.3" rx="19.6" ry="28.5" transform="rotate(16 973.0 606.3)" fill="url(#lg31)" stroke="#050505" stroke-width="0.9" /></svg></div>
<div id="status"></div>
<div id="task"><div class="abs" style="left:48px;top:0;width:344px;height:8px;background:#f2f2f2"></div><div class="abs" style="left:687px;top:0;width:48px;height:8px;background:#4a4a4a"></div><div class="abs" style="left:0;top:0;width:1920px;height:1px;background:#2a2a2a"></div><div class="abs" style="left:48px;top:0;width:344px;height:1px;background:#c4c4c4"></div><div class="abs" style="left:1914px;top:1px;width:1px;height:7px;background:#6a6a6a"></div><div class="lb" style="left:1815px;top:5px;color:#fff;font-size:12px;line-height:12px">15:32</div></div>
<div class="abs" style="left:20px;top:4px;width:1px;height:15px;background:#b8b8b8"></div>
<div class="abs" style="left:312px;top:4px;width:1px;height:15px;background:#c8c8c8"></div>
<div class="lb" style="left:860.1px;top:4px;font-size:12px;line-height:14px;color:#000;letter-spacing:0.498px;">VISI&nbsp;2018&nbsp;R2&nbsp;from&nbsp;Vero&nbsp;Software&nbsp;x64&nbsp;-&nbsp;</div>
<div class="lb " style="left:1090.2px;top:5.2px;font-size:12px;line-height:12px;color:#000;"><span>胶轮盘组合体</span></div>
<div class="lb" style="left:1163.2px;top:4px;font-size:12px;line-height:14px;color:#000;letter-spacing:0.061px;">.wkf&nbsp;-&nbsp;[</div>
<div class="lb " style="left:1199.6px;top:5.2px;font-size:12px;line-height:12px;color:#000;"><span>动态的</span></div>
<div class="lb" style="left:1236.2px;top:4px;font-size:12px;line-height:14px;color:#000;letter-spacing:0.672px;">]</div>
<div class="lb " style="left:7px;top:26.3px;font-size:12px;line-height:12px;color:#000;"><span>文件</span></div>
<div class="lb " style="left:45px;top:26.3px;font-size:12px;line-height:12px;color:#000;"><span>编辑</span></div>
<div class="lb " style="left:83px;top:26.3px;font-size:12px;line-height:12px;color:#000;"><span>线架构</span></div>
<div class="lb " style="left:133px;top:26.3px;font-size:12px;line-height:12px;color:#000;"><span>网格</span></div>
<div class="lb " style="left:171px;top:26.3px;font-size:12px;line-height:12px;color:#000;"><span>曲面</span></div>
<div class="lb " style="left:209px;top:26.3px;font-size:12px;line-height:12px;color:#000;"><span>实体编辑</span></div>
<div class="lb " style="left:271px;top:26.3px;font-size:12px;line-height:12px;color:#000;"><span>建模</span></div>
<div class="lb " style="left:309px;top:26.3px;font-size:12px;line-height:12px;color:#000;"><span>分析</span></div>
<div class="lb " style="left:347px;top:26.3px;font-size:12px;line-height:12px;color:#000;"><span>电极</span></div>
<div class="lb " style="left:385px;top:26.3px;font-size:12px;line-height:12px;color:#000;"><span>尺寸标注</span></div>
<div class="lb " style="left:447px;top:26.3px;font-size:12px;line-height:12px;color:#000;"><span>工程图</span></div>
<div class="lb " style="left:497px;top:26.3px;font-size:12px;line-height:12px;color:#000;"><span>系统</span></div>
<div class="lb " style="left:535px;top:26.3px;font-size:12px;line-height:12px;color:#000;"><span>视窗</span></div>
<div class="lb " style="left:573px;top:26.3px;font-size:12px;line-height:12px;color:#000;"><span>加工</span></div>
<div class="lb " style="left:611px;top:26.3px;font-size:12px;line-height:12px;color:#000;"><span>塑模</span></div>
<div class="lb " style="left:649px;top:26.3px;font-size:12px;line-height:12px;color:#000;"><span>冲模</span></div>
<div class="lb " style="left:687px;top:26.3px;font-size:12px;line-height:12px;color:#000;"><span>标准件</span></div>
<div class="lb " style="left:737px;top:26.3px;font-size:12px;line-height:12px;color:#000;"><span>模流分析</span></div>
<div class="lb " style="left:800px;top:26px;font-size:12px;line-height:12px;color:#000;"><span>?</span></div>
<div class="abs" style="left:12px;top:44px;width:19px;height:20px;background:linear-gradient(#f3f7fd,#e3ecf9);border:1px solid #a6a38e;border-bottom:none"></div>
<div class="abs" style="left:30px;top:44px;width:35px;height:20px;background:linear-gradient(#f3f7fd,#e3ecf9);border:1px solid #a6a38e;border-bottom:none"></div>
<div class="lb " style="left:34.6px;top:47.5px;font-size:12px;line-height:12px;color:#000;"><span>编辑</span></div>
<div class="abs" style="left:64px;top:42px;width:35px;height:22px;background:linear-gradient(#c9dff8,#b6d3f5);border:1px solid #a6a38e;border-bottom:none"></div>
<div class="lb " style="left:68.6px;top:46.5px;font-size:12px;line-height:12px;color:#000;font-weight:bold;"><span>标准</span></div>
<div class="abs" style="left:98px;top:44px;width:47px;height:20px;background:linear-gradient(#f3f7fd,#e3ecf9);border:1px solid #a6a38e;border-bottom:none"></div>
<div class="lb " style="left:102.6px;top:47.5px;font-size:12px;line-height:12px;color:#000;"><span>线架构</span></div>
<div class="abs" style="left:144px;top:44px;width:35px;height:20px;background:linear-gradient(#f3f7fd,#e3ecf9);border:1px solid #a6a38e;border-bottom:none"></div>
<div class="lb " style="left:148.6px;top:47.5px;font-size:12px;line-height:12px;color:#000;"><span>建模</span></div>
<div class="abs" style="left:178px;top:44px;width:35px;height:20px;background:linear-gradient(#f3f7fd,#e3ecf9);border:1px solid #a6a38e;border-bottom:none"></div>
<div class="lb " style="left:182.6px;top:47.5px;font-size:12px;line-height:12px;color:#000;"><span>曲面</span></div>
<div class="abs" style="left:212px;top:44px;width:35px;height:20px;background:linear-gradient(#f3f7fd,#e3ecf9);border:1px solid #a6a38e;border-bottom:none"></div>
<div class="lb " style="left:216.6px;top:47.5px;font-size:12px;line-height:12px;color:#000;"><span>尺寸</span></div>
<div class="abs" style="left:246px;top:44px;width:35px;height:20px;background:linear-gradient(#f3f7fd,#e3ecf9);border:1px solid #a6a38e;border-bottom:none"></div>
<div class="lb " style="left:250.6px;top:47.5px;font-size:12px;line-height:12px;color:#000;"><span>应用</span></div>
<div class="abs" style="left:280px;top:44px;width:35px;height:20px;background:linear-gradient(#f3f7fd,#e3ecf9);border:1px solid #a6a38e;border-bottom:none"></div>
<div class="lb " style="left:284.6px;top:47.5px;font-size:12px;line-height:12px;color:#000;"><span>塑膜</span></div>
<div class="abs" style="left:314px;top:44px;width:35px;height:20px;background:linear-gradient(#f3f7fd,#e3ecf9);border:1px solid #a6a38e;border-bottom:none"></div>
<div class="lb " style="left:318.6px;top:47.5px;font-size:12px;line-height:12px;color:#000;"><span>冲模</span></div>
<div class="abs" style="left:348px;top:44px;width:35px;height:20px;background:linear-gradient(#f3f7fd,#e3ecf9);border:1px solid #a6a38e;border-bottom:none"></div>
<div class="lb " style="left:352.6px;top:47.5px;font-size:12px;line-height:12px;color:#000;"><span>加工</span></div>
<div class="abs" style="left:382px;top:44px;width:35px;height:20px;background:linear-gradient(#f3f7fd,#e3ecf9);border:1px solid #a6a38e;border-bottom:none"></div>
<div class="lb " style="left:386.6px;top:47.5px;font-size:12px;line-height:12px;color:#000;"><span>模流</span></div>
<div class="abs" style="left:9px;top:64px;width:1911px;height:1px;background:#eef1f8"></div>
<div class="abs" style="left:13.5px;top:67px;width:3px;height:39px;background:repeating-linear-gradient(#fff 0 2px,transparent 2px 4px);box-shadow:1px 1px 0 #a8acbc inset"></div>
<div class="lb " style="left:103.45px;top:94.3px;font-size:12px;line-height:12px;color:#000;"><span>属性/过滤器</span></div>
<div class="abs" style="left:263.5px;top:67px;width:3px;height:39px;background:repeating-linear-gradient(#fff 0 2px,transparent 2px 4px);box-shadow:1px 1px 0 #a8acbc inset"></div>
<div class="abs" style="left:400.75px;top:66px;width:24px;height:24px;background:#ffe48c;border:1px solid #e8c76a"></div>
<div class="lb " style="left:415px;top:94.3px;font-size:12px;line-height:12px;color:#000;"><span>图形</span></div>
<div class="abs" style="left:592.5px;top:67px;width:3px;height:39px;background:repeating-linear-gradient(#fff 0 2px,transparent 2px 4px);box-shadow:1px 1px 0 #a8acbc inset"></div>
<div class="lb " style="left:698.3px;top:94.3px;font-size:12px;line-height:12px;color:#000;"><span>图像 (进阶)</span></div>
<div class="abs" style="left:869.5px;top:67px;width:3px;height:39px;background:repeating-linear-gradient(#fff 0 2px,transparent 2px 4px);box-shadow:1px 1px 0 #a8acbc inset"></div>
<div class="lb " style="left:943px;top:94.3px;font-size:12px;line-height:12px;color:#000;"><span>视图</span></div>
<div class="abs" style="left:1039.5px;top:67px;width:3px;height:39px;background:repeating-linear-gradient(#fff 0 2px,transparent 2px 4px);box-shadow:1px 1px 0 #a8acbc inset"></div>
<div class="lb " style="left:1065px;top:94.3px;font-size:12px;line-height:12px;color:#000;"><span>工作平面</span></div>
<div class="abs" style="left:1136.5px;top:67px;width:3px;height:39px;background:repeating-linear-gradient(#fff 0 2px,transparent 2px 4px);box-shadow:1px 1px 0 #a8acbc inset"></div>
<div class="lb " style="left:1211px;top:94.3px;font-size:12px;line-height:12px;color:#000;"><span>系统</span></div>
<div class="abs" style="left:2px;top:120px;width:56px;height:3px;background:repeating-linear-gradient(90deg,#fff 0 2px,transparent 2px 4px)"></div>
<div class="abs" style="left:3px;top:121px;width:56px;height:3px;background:repeating-linear-gradient(90deg,#a4a8b8 0 2px,transparent 2px 4px);opacity:.6"></div>
<div class="abs" style="left:2px;top:373px;width:56px;height:3px;background:repeating-linear-gradient(90deg,#fff 0 2px,transparent 2px 4px)"></div>
<div class="abs" style="left:3px;top:374px;width:56px;height:3px;background:repeating-linear-gradient(90deg,#a4a8b8 0 2px,transparent 2px 4px);opacity:.6"></div>
<div class="abs" style="left:64px;top:113px;width:24px;height:24px;background:#8e95ae"></div>
<div class="abs" style="left:92px;top:113px;width:24px;height:24px;background:#8e95ae"></div>
<div class="abs" style="left:120px;top:113px;width:24px;height:24px;background:#8e95ae"></div>
<div class="abs" style="left:148px;top:113px;width:24px;height:24px;background:#8e95ae"></div>
<div class="abs" style="left:176px;top:113px;width:24px;height:24px;background:#8e95ae"></div>
<div class="abs" style="left:204px;top:113px;width:24px;height:24px;background:#8e95ae"></div>
<div class="abs" style="left:232px;top:113px;width:24px;height:24px;background:#8e95ae"></div>
<div class="abs" style="left:260px;top:113px;width:24px;height:24px;background:#8e95ae"></div>
<div class="abs" style="left:288px;top:113px;width:24px;height:24px;background:#8e95ae"></div>
<div class="abs" style="left:316px;top:113px;width:24px;height:24px;background:#8e95ae"></div>
<div class="abs" style="left:344px;top:113px;width:24px;height:24px;background:#8e95ae"></div>
<div class="abs" style="left:64px;top:141px;width:24px;height:24px;background:#8e95ae"></div>
<div class="abs" style="left:64px;top:169px;width:24px;height:24px;background:#8e95ae"></div>
<div class="abs" style="left:64px;top:197px;width:24px;height:24px;background:#b8a56a;border:1px solid #ecd27e"></div>
<div class="abs" style="left:64px;top:225px;width:24px;height:24px;background:#8e95ae"></div>
<div class="abs" style="left:64px;top:253px;width:24px;height:24px;background:#8e95ae"></div>
<div class="abs" style="left:2px;top:1020px;width:1918px;height:1px;background:#a0a0a0"></div>
<div class="abs" style="left:1341px;top:1003px;width:130px;height:16px;background:#fff"></div>
<div class="abs" style="left:1336px;top:1003px;width:3px;height:16px;background:repeating-linear-gradient(#fff 0 2px,transparent 2px 4px);box-shadow:1px 1px 0 #a8acbc inset"></div>
<div class="abs" style="left:1476px;top:1003px;width:3px;height:16px;background:repeating-linear-gradient(#fff 0 2px,transparent 2px 4px);box-shadow:1px 1px 0 #a8acbc inset"></div>
<div class="abs" style="left:1657px;top:1003px;width:3px;height:16px;background:repeating-linear-gradient(#fff 0 2px,transparent 2px 4px);box-shadow:1px 1px 0 #a8acbc inset"></div>
<div class="lb " style="left:1486.6px;top:1005px;font-size:12px;line-height:12px;color:#000;"><span>绝对 XY 上视图</span></div>
<div class="lb " style="left:1601px;top:1005px;font-size:12px;line-height:12px;color:#000;"><span>绝对视图</span></div>
<div class="lb" style="left:1668px;top:1004px;font-size:12px;line-height:14px;color:#000;letter-spacing:0.008px;font-weight:bold;">LAYER0</div>
<div class="abs" style="left:1592.5px;top:1003px;width:1px;height:15px;background:#9aa0b0"></div>
<div class="abs" style="left:1727px;top:1003px;width:1px;height:15px;background:#9aa0b0"></div>
<div class="abs" style="left:1755.5px;top:1003px;width:1px;height:15px;background:#9aa0b0"></div>
<div class="abs" style="left:1800.5px;top:1003px;width:1px;height:15px;background:#9aa0b0"></div>
<div class="abs" style="left:1843px;top:1003px;width:1px;height:15px;background:#9aa0b0"></div>
<div class="abs" style="left:1886px;top:1003px;width:1px;height:15px;background:#9aa0b0"></div>
<div class="abs" style="left:1762px;top:1004.5px;width:32px;height:12px;background:#46608c"></div>
<div class="abs" style="left:1805px;top:1004.5px;width:32px;height:12px;background:#46608c"></div>
<div class="abs" style="left:1848px;top:1004.5px;width:32px;height:12px;background:#46608c"></div>
<div class="abs" style="left:1132px;top:1023px;width:1px;height:15px;background:#9aa0b0"></div>
<div class="abs" style="left:1176px;top:1023px;width:1px;height:15px;background:#9aa0b0"></div>
<div class="abs" style="left:1205.5px;top:1023px;width:1px;height:15px;background:#9aa0b0"></div>
<div class="abs" style="left:1237.5px;top:1023px;width:1px;height:15px;background:#9aa0b0"></div>
<div class="abs" style="left:1268.7px;top:1023px;width:1px;height:15px;background:#9aa0b0"></div>
<div class="abs" style="left:1299.5px;top:1023px;width:1px;height:15px;background:#9aa0b0"></div>
<div class="abs" style="left:1330.7px;top:1023px;width:1px;height:15px;background:#9aa0b0"></div>
<div class="abs" style="left:1361.4px;top:1023px;width:1px;height:15px;background:#9aa0b0"></div>
<div class="abs" style="left:1423.8px;top:1023px;width:1px;height:15px;background:#9aa0b0"></div>
<div class="abs" style="left:1455.4px;top:1023px;width:1px;height:15px;background:#9aa0b0"></div>
<div class="abs" style="left:1578.4px;top:1023px;width:1px;height:15px;background:#9aa0b0"></div>
<div class="abs" style="left:1653.2px;top:1023px;width:1px;height:15px;background:#9aa0b0"></div>
<div class="lb " style="left:1140.6px;top:1025px;font-size:12px;line-height:12px;color:#000;"><span>拴牢</span></div>
<div class="lb" style="left:1463px;top:1024px;font-size:12px;line-height:14px;color:#000;letter-spacing:-0.047px;">LS:&nbsp;1.00&nbsp;PS:&nbsp;1.00</div>
<div class="lb " style="left:1589px;top:1025px;font-size:12px;line-height:12px;color:#000;"><span>单位: 毫米</span></div>
<div class="lb" style="left:1663px;top:1024px;font-size:12px;line-height:14px;color:#000;letter-spacing:0.474px;">X&nbsp;=&nbsp;0115.930</div>
<div class="lb" style="left:1745px;top:1024px;font-size:12px;line-height:14px;color:#e81010;letter-spacing:0.320px;">Y&nbsp;=-0082.735</div>
<div class="lb" style="left:1825px;top:1024px;font-size:12px;line-height:14px;color:#000;letter-spacing:0.414px;">Z&nbsp;=&nbsp;0000.000</div>
<div class="abs" style="left:1212px;top:1022px;width:18px;height:17px;background:#ffe27a"></div>
<div class="abs" style="left:1336px;top:1022px;width:18px;height:17px;background:#ffe27a"></div>
<svg class="abs" style="left:0;top:0;pointer-events:none" width="1920" height="1048" viewBox="0 0 1920 1048"><defs>
<linearGradient id="icb" x1="0" x2="1" y1="0" y2="0"><stop offset="0" stop-color="#7fa8e8"/><stop offset="0.45" stop-color="#3b6cc8"/><stop offset="1" stop-color="#16327e"/></linearGradient>
<linearGradient id="icl" x1="0" x2="1" y1="0" y2="0"><stop offset="0" stop-color="#e8eefc"/><stop offset="0.5" stop-color="#c4d2f0"/><stop offset="1" stop-color="#9fb2dc"/></linearGradient>
<linearGradient id="icg" x1="0" x2="0" y1="0" y2="1"><stop offset="0" stop-color="#7be04a"/><stop offset="1" stop-color="#1f9a16"/></linearGradient>
<linearGradient id="icy" x1="0" x2="0" y1="0" y2="1"><stop offset="0" stop-color="#fff27a"/><stop offset="1" stop-color="#e0b400"/></linearGradient>
<linearGradient id="icbl" x1="0" x2="0" y1="0" y2="1"><stop offset="0" stop-color="#9cc4f4"/><stop offset="1" stop-color="#3a78d0"/></linearGradient>
<linearGradient id="icgr" x1="0" x2="1" y1="0" y2="1"><stop offset="0" stop-color="#e4e4e4"/><stop offset="1" stop-color="#6e6e6e"/></linearGradient>
<radialGradient id="iceye" cx="0.5" cy="0.5" r="0.5"><stop offset="0" stop-color="#10204a"/><stop offset="0.45" stop-color="#3a5a9a"/><stop offset="1" stop-color="#7f9acc"/></radialGradient>
<radialGradient id="icglass" cx="0.4" cy="0.35" r="0.7"><stop offset="0" stop-color="#f4faff"/><stop offset="0.6" stop-color="#a8c8f0"/><stop offset="1" stop-color="#5a86c8"/></radialGradient>
<radialGradient id="icsm" cx="0.4" cy="0.35" r="0.7"><stop offset="0" stop-color="#fff6a0"/><stop offset="1" stop-color="#f0b818"/></radialGradient>
<linearGradient id="icfold" x1="0" x2="0" y1="0" y2="1"><stop offset="0" stop-color="#ffe89a"/><stop offset="1" stop-color="#e8b83a"/></linearGradient>
<linearGradient id="icgcube" x1="0" x2="1" y1="0" y2="1"><stop offset="0" stop-color="#6af04a"/><stop offset="1" stop-color="#14a010"/></linearGradient>
</defs><g transform="translate(10 11) scale(1)"><rect x="-8" y="-8" width="16" height="16" fill="#6cb52d"/><path d="M-5.5,-3 l4,9 h2 l5,-11 h-3.4 l-2.8,7 l-2,-5z" fill="#fff"/><circle cx="-4" cy="-5" r="1.2" fill="#fff"/></g>
<g transform="translate(39.5 11.5) scale(1.05)"><path d="M-6,-8 h8 l4,4 v12 h-12z" fill="#f8faff" stroke="#222" stroke-width="1"/><path d="M2,-8 v4 h4" fill="#dfe6f6" stroke="#222" stroke-width="0.8"/></g>
<g transform="translate(64 11.5) scale(1.05)"><path d="M-8,7 v-11 h4 l1.5,1.6 h7.5 v3" fill="url(#icfold)" stroke="#a07818" stroke-width="0.7"/><path d="M-8,7 l3,-7 h13 l-3,7z" fill="#ffd968" stroke="#a07818" stroke-width="0.7"/><path d="M0,-3 q2,-5 7,-4.5 v-2.5 l4,4.5 l-4,4 v-2.5 q-4,-0.5 -7,1z" fill="#3cb030" stroke="#1a7a14" stroke-width="0.5"/></g>
<g transform="translate(87.6 11.5) scale(1.05)"><path d="M-9,-1 v-7 h3 l1,1 h5 v6z" fill="url(#icfold)" stroke="#a07818" stroke-width="0.6"/><path d="M-9,8 v-7 h3 l1,1 h5 v6z" fill="url(#icfold)" stroke="#a07818" stroke-width="0.6"/><path d="M1,-5 h5 l3,3 v9 h-8z" fill="#eef3ff" stroke="#3a4a6a" stroke-width="0.7"/><path d="M-1,-3 h3 M-1,5 h3" stroke="#48b838" stroke-width="1"/></g>
<g transform="translate(111.3 11.5) scale(1.05)"><g transform="translate(0 0) scale(1)"><rect x="-7" y="-7" width="14" height="14" rx="1" fill="#3a5a9e" stroke="#1c2c5c" stroke-width="0.8"/><rect x="-5" y="-7" width="10" height="6" fill="#f4f4f4"/><rect x="-5" y="-6" width="10" height="1.3" fill="#e04040"/><rect x="-4" y="2" width="8" height="5" fill="#c8ccd8"/><rect x="-2.6" y="3" width="2.2" height="3.4" fill="#1c2c5c"/></g></g>
<g transform="translate(135.4 11.5) scale(1.05)"><g transform="translate(2.5 -3) scale(0.72)"><rect x="-7" y="-7" width="14" height="14" rx="1" fill="#3a5a9e" stroke="#1c2c5c" stroke-width="0.8"/><rect x="-5" y="-7" width="10" height="6" fill="#f4f4f4"/><rect x="-5" y="-6" width="10" height="1.3" fill="#e04040"/><rect x="-4" y="2" width="8" height="5" fill="#c8ccd8"/><rect x="-2.6" y="3" width="2.2" height="3.4" fill="#1c2c5c"/></g><g transform="translate(-2.5 3) scale(0.72)"><rect x="-7" y="-7" width="14" height="14" rx="1" fill="#3a5a9e" stroke="#1c2c5c" stroke-width="0.8"/><rect x="-5" y="-7" width="10" height="6" fill="#f4f4f4"/><rect x="-5" y="-6" width="10" height="1.3" fill="#e04040"/><rect x="-4" y="2" width="8" height="5" fill="#c8ccd8"/><rect x="-2.6" y="3" width="2.2" height="3.4" fill="#1c2c5c"/></g></g>
<g transform="translate(159 11.5) scale(1.05)"><g transform="translate(-3 -4) scale(0.7)"><rect x="-7" y="-7" width="14" height="14" rx="1" fill="#3a5a9e" stroke="#1c2c5c" stroke-width="0.8"/><rect x="-5" y="-7" width="10" height="6" fill="#f4f4f4"/><rect x="-5" y="-6" width="10" height="1.3" fill="#e04040"/><rect x="-4" y="2" width="8" height="5" fill="#c8ccd8"/><rect x="-2.6" y="3" width="2.2" height="3.4" fill="#1c2c5c"/></g><g transform="translate(4 7) scale(0.7)"><path d="M0,-6 l6,-2.5 l0,7 l-6,3z" fill="#b4b4b4" stroke="#444" stroke-width="0.7"/><path d="M-6,-8.5 l6,2.5 v7.5 l-6,-3z" fill="#8c8c8c" stroke="#444" stroke-width="0.7"/><path d="M-6,-8.5 l6,-2 l6,2 l-6,2.5z" fill="#dcdcdc" stroke="#444" stroke-width="0.7"/></g><path d="M2,-5 q4,-3 6,1 l1.6,-1 l-0.6,4 l-3.6,-1.2 l1.4,-0.8 q-1.6,-2.4 -4,-0.6z" fill="#38b030"/></g>
<g transform="translate(184 11.5) scale(1.05)"><rect x="-5" y="-8" width="10" height="8" fill="#f8f8f8" stroke="#667" stroke-width="0.7"/><path d="M0,-7 l3,3.4 h-2 v2.6 h-2 v-2.6 h-2z" fill="#30b838"/><path d="M-8,0 h16 v6 h-16z" fill="#d4d8e0" stroke="#556" stroke-width="0.8"/><rect x="-6" y="5" width="12" height="3" fill="#fff" stroke="#667" stroke-width="0.6"/></g>
<g transform="translate(207 11.5) scale(1.05)"><circle cx="0" cy="0" r="9" fill="#6a9a3c"/><circle cx="-0.5" cy="-0.5" r="5.6" fill="url(#icglass)" stroke="#e8e8e8" stroke-width="1"/><path d="M4,4 l4.5,4.5" stroke="#ddd" stroke-width="2.4" stroke-linecap="round"/></g>
<g transform="translate(231.6 11.5) scale(1.05)"><path d="M-8,-1 l6,-6 v3.6 q8,0 8.5,9 q-2.5,-4.6 -8.5,-4.4 v3.8z" fill="url(#icgr)" stroke="#8a8a8a" stroke-width="0.6"/></g>
<g transform="translate(254.3 11.5) scale(1.05)"><path d="M8,-1 l-6,-6 v3.6 q-8,0 -8.5,9 q2.5,-4.6 8.5,-4.4 v3.8z" fill="url(#icgr)" stroke="#8a8a8a" stroke-width="0.6"/></g>
<g transform="translate(278.4 11.5) scale(1.05)"><path d="M-3,-2 l6,-6 v3.6 q6,1 5,10 q-1.5,-5 -5,-5 v3.8z" fill="url(#icbl)" stroke="#2a5aa8" stroke-width="0.6"/><path d="M-8,0 h6 l-2.2,3.6 l2.2,4 h-6 l2.2,-4z" fill="#c8a040" stroke="#6a5010" stroke-width="0.6"/></g>
<path d="M295.5,9.5 h6" stroke="#000" stroke-width="1"/><path d="M295.5,12 h6 l-3,3.2z" fill="#000"/>
<path d="M1799,10.5 h10" stroke="#000" stroke-width="1"/>
<rect x="1844.5" y="7.5" width="8" height="8" fill="#fff" stroke="#000" stroke-width="1"/><path d="M1846.5,7.5 v-2 h8 v8 h-2" fill="none" stroke="#000" stroke-width="1"/>
<path d="M1889.5,5.5 l10,10 M1899.5,5.5 l-10,10" stroke="#000" stroke-width="1.1"/>
<path d="M1869,37.5 h9" stroke="#8a846c" stroke-width="1"/>
<rect x="1887.5" y="31.5" width="6" height="6" fill="none" stroke="#8a846c" stroke-width="1"/><path d="M1889.5,31.5 v-2 h6 v6 h-2" fill="none" stroke="#8a846c" stroke-width="1"/>
<path d="M1905.5,28.5 l9,9 M1914.5,28.5 l-9,9" stroke="#8a846c" stroke-width="1"/>
<path d="M18,52.5 h7 l-3.5,4z" fill="#000"/>
<g transform="translate(33 78.5) scale(1.08)"><path d="M-8,-6 h9 l1.5,1.5 h-9z M-8,-3.4 h9 l1.5,1.5 h-9z" fill="#a8b4e8" stroke="#5868b0" stroke-width="0.5"/><ellipse cx="-1" cy="4" rx="7.5" ry="4.6" fill="#d8b890" stroke="#6a4a2a" stroke-width="0.7"/><circle cx="-4" cy="4.6" r="1.6" fill="#2050e0"/><circle cx="0" cy="6" r="1.6" fill="#20b030"/><circle cx="3.6" cy="3.4" r="1.6" fill="#e02020"/><path d="M1,2 l7,-10" stroke="#8a4a1a" stroke-width="1.6"/></g>
<g transform="translate(59.05 78.5) scale(1.08)"><path d="M-3,-8 h7 l3,3 v10 h-10z" fill="#a8c0f0" stroke="#223" stroke-width="0.8"/><path d="M-7,-5 h7 v9 h-7z" fill="#c8d8f8" stroke="#223" stroke-width="0.8"/><g transform="translate(-1 6) scale(0.78)"><path d="M-10,2 Q-5,-4.6 0.5,-4.6 Q6.5,-4.6 10,0.6 Q5,3.6 0,3.6 Q-5.5,3.6 -10,2Z" fill="#b9bdd6" stroke="#6a6a88" stroke-width="0.5"/><ellipse cx="0.5" cy="-0.6" rx="4.3" ry="3.8" fill="url(#iceye)"/><circle cx="0.5" cy="-0.6" r="1.7" fill="#0a0a20"/><path d="M-10,1.6 Q-4.5,-6.4 1,-6 Q7.5,-5.6 10.2,0" fill="none" stroke="#34344e" stroke-width="1.9"/><path d="M-7,-3.4 l-1.6,-1.8 M-3.6,-5.4 l-0.8,-2 M0.6,-6 l0,-2 M4.6,-5.4 l1,-1.8 M8,-3.2 l1.6,-1.4" stroke="#34344e" stroke-width="0.8"/><circle cx="-0.8" cy="-2" r="0.9" fill="#e8f0ff"/></g></g>
<g transform="translate(85.1 78.5) scale(1.08)"><g transform="translate(0 -3.5) scale(0.95)"><path d="M-10,2 Q-5,-4.6 0.5,-4.6 Q6.5,-4.6 10,0.6 Q5,3.6 0,3.6 Q-5.5,3.6 -10,2Z" fill="#b9bdd6" stroke="#6a6a88" stroke-width="0.5"/><ellipse cx="0.5" cy="-0.6" rx="4.3" ry="3.8" fill="url(#iceye)"/><circle cx="0.5" cy="-0.6" r="1.7" fill="#0a0a20"/><path d="M-10,1.6 Q-4.5,-6.4 1,-6 Q7.5,-5.6 10.2,0" fill="none" stroke="#34344e" stroke-width="1.9"/><path d="M-7,-3.4 l-1.6,-1.8 M-3.6,-5.4 l-0.8,-2 M0.6,-6 l0,-2 M4.6,-5.4 l1,-1.8 M8,-3.2 l1.6,-1.4" stroke="#34344e" stroke-width="0.8"/><circle cx="-0.8" cy="-2" r="0.9" fill="#e8f0ff"/></g><path d="M-8.7,4.5 h6.4 M-5.5,1.3 v6.4" stroke="#58c820" stroke-width="2.4" fill="none"/><path d="M1.5,4.5 q3.5,-3.5 6,0 q1.5,3 -3,5" fill="none" stroke="#3a6ad0" stroke-width="1.7"/><path d="M0.3,2.9 l3.2,-0.3 l-1,3z" fill="#3a6ad0"/></g>
<g transform="translate(111.15 78.5) scale(1.08)"><g transform="translate(0 -3.5) scale(0.95)"><path d="M-10,2 Q-5,-4.6 0.5,-4.6 Q6.5,-4.6 10,0.6 Q5,3.6 0,3.6 Q-5.5,3.6 -10,2Z" fill="#b9bdd6" stroke="#6a6a88" stroke-width="0.5"/><ellipse cx="0.5" cy="-0.6" rx="4.3" ry="3.8" fill="url(#iceye)"/><circle cx="0.5" cy="-0.6" r="1.7" fill="#0a0a20"/><path d="M-10,1.6 Q-4.5,-6.4 1,-6 Q7.5,-5.6 10.2,0" fill="none" stroke="#34344e" stroke-width="1.9"/><path d="M-7,-3.4 l-1.6,-1.8 M-3.6,-5.4 l-0.8,-2 M0.6,-6 l0,-2 M4.6,-5.4 l1,-1.8 M8,-3.2 l1.6,-1.4" stroke="#34344e" stroke-width="0.8"/><circle cx="-0.8" cy="-2" r="0.9" fill="#e8f0ff"/></g><path d="M-8.8,5.5 h7.6" stroke="#e8d800" stroke-width="2.4" fill="none"/><path d="M1.5,4.5 q3.5,-3.5 6,0 q1.5,3 -3,5" fill="none" stroke="#3a6ad0" stroke-width="1.7"/><path d="M0.3,2.9 l3.2,-0.3 l-1,3z" fill="#3a6ad0"/></g>
<g transform="translate(137.2 78.5) scale(1.08)"><g transform="translate(0 -4.5) scale(0.9)"><path d="M-10,2 Q-5,-4.6 0.5,-4.6 Q6.5,-4.6 10,0.6 Q5,3.6 0,3.6 Q-5.5,3.6 -10,2Z" fill="#b9bdd6" stroke="#6a6a88" stroke-width="0.5"/><ellipse cx="0.5" cy="-0.6" rx="4.3" ry="3.8" fill="url(#iceye)"/><circle cx="0.5" cy="-0.6" r="1.7" fill="#0a0a20"/><path d="M-10,1.6 Q-4.5,-6.4 1,-6 Q7.5,-5.6 10.2,0" fill="none" stroke="#34344e" stroke-width="1.9"/><path d="M-7,-3.4 l-1.6,-1.8 M-3.6,-5.4 l-0.8,-2 M0.6,-6 l0,-2 M4.6,-5.4 l1,-1.8 M8,-3.2 l1.6,-1.4" stroke="#34344e" stroke-width="0.8"/><circle cx="-0.8" cy="-2" r="0.9" fill="#e8f0ff"/></g><rect x="-8" y="-3" width="5.6" height="11" rx="1" fill="#111"/><rect x="2.4" y="-3" width="5.6" height="11" rx="1" fill="#111"/><circle cx="-5.2" cy="0" r="2" fill="#f0c000"/><circle cx="-5.2" cy="5" r="2" fill="#20c020"/><circle cx="5.2" cy="0" r="2" fill="#e01010"/><circle cx="5.2" cy="5" r="2" fill="#f0b000"/></g>
<g transform="translate(163.25 78.5) scale(1.08)"><g transform="translate(0 -4.5) scale(0.9)"><path d="M-10,2 Q-5,-4.6 0.5,-4.6 Q6.5,-4.6 10,0.6 Q5,3.6 0,3.6 Q-5.5,3.6 -10,2Z" fill="#b9bdd6" stroke="#6a6a88" stroke-width="0.5"/><ellipse cx="0.5" cy="-0.6" rx="4.3" ry="3.8" fill="url(#iceye)"/><circle cx="0.5" cy="-0.6" r="1.7" fill="#0a0a20"/><path d="M-10,1.6 Q-4.5,-6.4 1,-6 Q7.5,-5.6 10.2,0" fill="none" stroke="#34344e" stroke-width="1.9"/><path d="M-7,-3.4 l-1.6,-1.8 M-3.6,-5.4 l-0.8,-2 M0.6,-6 l0,-2 M4.6,-5.4 l1,-1.8 M8,-3.2 l1.6,-1.4" stroke="#34344e" stroke-width="0.8"/><circle cx="-0.8" cy="-2" r="0.9" fill="#e8f0ff"/></g><g transform="translate(0 1.5)" ><path d="M-6,2 a6.5,5.5 0 0 1 11,-4 l2,-1.6 v6 h-6.4 l2.2,-2 a3.6,3 0 0 0 -5.8,2z" fill="#58c030" stroke="#2a8a18" stroke-width="0.6"/><path d="M6.5,3 a6.5,5.5 0 0 1 -11,4 l-2,1.6 v-6 h6.4 l-2.2,2 a3.6,3 0 0 0 5.8,-2z" fill="#f4e020" stroke="#b09a00" stroke-width="0.6"/></g></g>
<g transform="translate(189.3 78.5) scale(1.08)"><g transform="translate(0 -3.5) scale(0.95)"><path d="M-10,2 Q-5,-4.6 0.5,-4.6 Q6.5,-4.6 10,0.6 Q5,3.6 0,3.6 Q-5.5,3.6 -10,2Z" fill="#b9bdd6" stroke="#6a6a88" stroke-width="0.5"/><ellipse cx="0.5" cy="-0.6" rx="4.3" ry="3.8" fill="url(#iceye)"/><circle cx="0.5" cy="-0.6" r="1.7" fill="#0a0a20"/><path d="M-10,1.6 Q-4.5,-6.4 1,-6 Q7.5,-5.6 10.2,0" fill="none" stroke="#34344e" stroke-width="1.9"/><path d="M-7,-3.4 l-1.6,-1.8 M-3.6,-5.4 l-0.8,-2 M0.6,-6 l0,-2 M4.6,-5.4 l1,-1.8 M8,-3.2 l1.6,-1.4" stroke="#34344e" stroke-width="0.8"/><circle cx="-0.8" cy="-2" r="0.9" fill="#e8f0ff"/></g><path d="M-8.1,2.5 h5.2 M-5.5,-0.1 v5.2" stroke="#58c820" stroke-width="2.2" fill="none"/><path d="M-3,8 l5,-7" stroke="#222" stroke-width="1.1"/><path d="M1.8,7 h6.4" stroke="#e8d800" stroke-width="2.2" fill="none"/></g>
<g transform="translate(215.35 78.5) scale(1.08)"><g transform="translate(0 -3.5) scale(0.95)"><path d="M-10,2 Q-5,-4.6 0.5,-4.6 Q6.5,-4.6 10,0.6 Q5,3.6 0,3.6 Q-5.5,3.6 -10,2Z" fill="#b9bdd6" stroke="#6a6a88" stroke-width="0.5"/><ellipse cx="0.5" cy="-0.6" rx="4.3" ry="3.8" fill="url(#iceye)"/><circle cx="0.5" cy="-0.6" r="1.7" fill="#0a0a20"/><path d="M-10,1.6 Q-4.5,-6.4 1,-6 Q7.5,-5.6 10.2,0" fill="none" stroke="#34344e" stroke-width="1.9"/><path d="M-7,-3.4 l-1.6,-1.8 M-3.6,-5.4 l-0.8,-2 M0.6,-6 l0,-2 M4.6,-5.4 l1,-1.8 M8,-3.2 l1.6,-1.4" stroke="#34344e" stroke-width="0.8"/><circle cx="-0.8" cy="-2" r="0.9" fill="#e8f0ff"/></g><path d="M-2.3,5 h7.6 M1.5,1.2 v7.6" stroke="#58c820" stroke-width="2.8" fill="none"/></g>
<g transform="translate(241.4 78.5) scale(1.08)"><g transform="translate(0 -3.5) scale(0.95)"><path d="M-10,2 Q-5,-4.6 0.5,-4.6 Q6.5,-4.6 10,0.6 Q5,3.6 0,3.6 Q-5.5,3.6 -10,2Z" fill="#b9bdd6" stroke="#6a6a88" stroke-width="0.5"/><ellipse cx="0.5" cy="-0.6" rx="4.3" ry="3.8" fill="url(#iceye)"/><circle cx="0.5" cy="-0.6" r="1.7" fill="#0a0a20"/><path d="M-10,1.6 Q-4.5,-6.4 1,-6 Q7.5,-5.6 10.2,0" fill="none" stroke="#34344e" stroke-width="1.9"/><path d="M-7,-3.4 l-1.6,-1.8 M-3.6,-5.4 l-0.8,-2 M0.6,-6 l0,-2 M4.6,-5.4 l1,-1.8 M8,-3.2 l1.6,-1.4" stroke="#34344e" stroke-width="0.8"/><circle cx="-0.8" cy="-2" r="0.9" fill="#e8f0ff"/></g><path d="M-2.4,5 h8.8" stroke="#e8d800" stroke-width="2.8" fill="none"/></g>
<g transform="translate(283 78.5) scale(1.08)"><g transform="scale(1)"><path d="M-7,-1 a7,7 0 0 1 12,-4.5 l2,-2 v7 h-7 l2.3,-2.3 a4,4 0 0 0 -6.8,3z" fill="#8fbcf0" stroke="#3f82d8" stroke-width="0.6"/><path d="M7,1 a7,7 0 0 1 -12,4.5 l-2,2 v-7 h7 l-2.3,2.3 a4,4 0 0 0 6.8,-3z" fill="#3f82d8" stroke="#3f82d8" stroke-width="0.6"/></g></g>
<g transform="translate(309.05 78.5) scale(1.08)"><path d="M-5.5,-6.5 v13 a5.5,2.2 0 0 0 11,0 v-13" fill="none" stroke="#222" stroke-width="1"/><path d="M-5.5,6.5 a5.5,2.2 0 0 1 11,0" fill="none" stroke="#222" stroke-width="0.7" opacity="0.6"/><ellipse cx="0" cy="-6.5" rx="5.5" ry="2.2" fill="none" stroke="#222" stroke-width="1"/></g>
<g transform="translate(335.1 78.5) scale(1.08)"><path d="M-5.5,-6.5 v13 a5.5,2.2 0 0 0 11,0 v-13" fill="none" stroke="#222" stroke-width="1"/><ellipse cx="0" cy="-6.5" rx="5.5" ry="2.2" fill="none" stroke="#222" stroke-width="1"/></g>
<g transform="translate(361.15 78.5) scale(1.08)"><path d="M-5.5,-6.5 v13 a5.5,2.2 0 0 0 11,0 v-13" fill="none" stroke="#333" stroke-width="1"/><path d="M-5.5,6.5 a5.5,2.2 0 0 1 11,0" fill="none" stroke="#333" stroke-width="0.7" opacity="0.6"/><ellipse cx="0" cy="-6.5" rx="5.5" ry="2.2" fill="none" stroke="#333" stroke-width="1"/></g>
<g transform="translate(387.2 78.5) scale(1.08)"><ellipse cx="3.5" cy="7.3" rx="6" ry="2" fill="#555" opacity="0.45"/><path d="M-5.5,-6.5 v13 a5.5,2.2 0 0 0 11,0 v-13" fill="url(#icb)" stroke="#20e0f0" stroke-width="1.1"/><path d="M-5.5,6.5 a5.5,2.2 0 0 1 11,0" fill="none" stroke="#20e0f0" stroke-width="0.77" opacity="0.6"/><ellipse cx="0" cy="-6.5" rx="5.5" ry="2.2" fill="#8fb4f0" stroke="#20e0f0" stroke-width="1.1"/></g>
<g transform="translate(413.25 78.5) scale(1.08)"><ellipse cx="3.5" cy="7.3" rx="6" ry="2" fill="#555" opacity="0.45"/><path d="M-5.5,-6.5 v13 a5.5,2.2 0 0 0 11,0 v-13" fill="url(#icb)" stroke="#10204a" stroke-width="0.8"/><path d="M-5.5,6.5 a5.5,2.2 0 0 1 11,0" fill="none" stroke="#10204a" stroke-width="0.56" opacity="0.6"/><ellipse cx="0" cy="-6.5" rx="5.5" ry="2.2" fill="#8fb4f0" stroke="#10204a" stroke-width="0.8"/></g>
<g transform="translate(439.3 78.5) scale(1.08)"><ellipse cx="3.5" cy="7.3" rx="6" ry="2" fill="#555" opacity="0.45"/><path d="M-5.5,-6.5 v13 a5.5,2.2 0 0 0 11,0 v-13" fill="url(#icl)" stroke="#40e0f0" stroke-width="1"/><path d="M-5.5,6.5 a5.5,2.2 0 0 1 11,0" fill="none" stroke="#40e0f0" stroke-width="0.7" opacity="0.6"/><ellipse cx="0" cy="-6.5" rx="5.5" ry="2.2" fill="#eef4ff" stroke="#40e0f0" stroke-width="1"/></g>
<g transform="translate(465.35 78.5) scale(1.08)"><ellipse cx="3.5" cy="7.3" rx="6" ry="2" fill="#555" opacity="0.45"/><path d="M-5.5,-6.5 v13 a5.5,2.2 0 0 0 11,0 v-13" fill="url(#icl)" stroke="#556" stroke-width="0.8"/><path d="M-5.5,6.5 a5.5,2.2 0 0 1 11,0" fill="none" stroke="#556" stroke-width="0.56" opacity="0.6"/><ellipse cx="0" cy="-6.5" rx="5.5" ry="2.2" fill="#eef4ff" stroke="#556" stroke-width="0.8"/></g>
<g transform="translate(491.4 78.5) scale(1.08)"><path d="M-5.5,-6.5 v13 a5.5,2.2 0 0 0 11,0 v-13" fill="#f4f4f4" stroke="#222" stroke-width="1"/><path d="M-5.5,6.5 a5.5,2.2 0 0 1 11,0" fill="none" stroke="#222" stroke-width="0.7" opacity="0.6"/><ellipse cx="0" cy="-6.5" rx="5.5" ry="2.2" fill="#f4f4f4" stroke="#222" stroke-width="1"/><path d="M-4,-5 l3,11 M-1,-4.6 l3,11 M2,-5 l2,10 M3.6,-5 l-5,11 M0.5,-4.6 l-4,10" stroke="#222" stroke-width="0.6" fill="none"/></g>
<g transform="translate(517.45 78.5) scale(1.08)"><g transform="translate(-3 -3)" ><path d="M-4.4,-5 v10 a4.4,1.8 0 0 0 8.8,0 v-10" fill="#f4f4f4" stroke="#555" stroke-width="1"/><path d="M-4.4,5 a4.4,1.8 0 0 1 8.8,0" fill="none" stroke="#555" stroke-width="0.7" opacity="0.6"/><ellipse cx="0" cy="-5" rx="4.4" ry="1.8" fill="#f4f4f4" stroke="#555" stroke-width="1"/></g><g transform="translate(4 3)" ><path d="M-4.4,-5 v10 a4.4,1.8 0 0 0 8.8,0 v-10" fill="url(#icb)" stroke="#10204a" stroke-width="0.7"/><path d="M-4.4,5 a4.4,1.8 0 0 1 8.8,0" fill="none" stroke="#10204a" stroke-width="0.49" opacity="0.6"/><ellipse cx="0" cy="-5" rx="4.4" ry="1.8" fill="#8fb4f0" stroke="#10204a" stroke-width="0.7"/></g><path d="M2,-9 h5 v5" fill="none" stroke="#30b030" stroke-width="1.8"/><path d="M-2,9 h-5 v-4" fill="none" stroke="#30b030" stroke-width="1.8"/></g>
<g transform="translate(543.5 78.5) scale(1.08)"><g transform="translate(-2 -1)" ><path d="M-5,-6 v12 a5,2.2 0 0 0 10,0 v-12" fill="url(#icb)" stroke="#10204a" stroke-width="0.7"/><path d="M-5,6 a5,2.2 0 0 1 10,0" fill="none" stroke="#10204a" stroke-width="0.49" opacity="0.6"/><ellipse cx="0" cy="-6" rx="5" ry="2.2" fill="#8fb4f0" stroke="#10204a" stroke-width="0.7"/></g><g transform="translate(4 4)" ><g transform="scale(0.6)"><path d="M-7,-1 a7,7 0 0 1 12,-4.5 l2,-2 v7 h-7 l2.3,-2.3 a4,4 0 0 0 -6.8,3z" fill="#8fbcf0" stroke="#3f82d8" stroke-width="0.6"/><path d="M7,1 a7,7 0 0 1 -12,4.5 l-2,2 v-7 h7 l-2.3,2.3 a4,4 0 0 0 6.8,-3z" fill="#3f82d8" stroke="#3f82d8" stroke-width="0.6"/></g></g></g>
<g transform="translate(569.55 78.5) scale(1.08)"><rect x="-8" y="-7" width="15" height="11" fill="#2a4a8a" stroke="#8a94a8" stroke-width="1"/><path d="M-6,7 l10,-11" stroke="#c8ccd4" stroke-width="2.4" stroke-linecap="round"/><path d="M6,7 l-10,-11" stroke="#5a8ad8" stroke-width="2.4" stroke-linecap="round"/><circle cx="5" cy="-5" r="2.4" fill="none" stroke="#c8ccd4" stroke-width="1.4"/></g>
<g transform="translate(612 78.5) scale(1.08)"><g transform="translate(-4 -1.5) scale(0.62)"><path d="M0,-6 l6,-2.5 l0,7 l-6,3z" fill="#b4b4b4" stroke="#444" stroke-width="0.7"/><path d="M-6,-8.5 l6,2.5 v7.5 l-6,-3z" fill="#8c8c8c" stroke="#444" stroke-width="0.7"/><path d="M-6,-8.5 l6,-2 l6,2 l-6,2.5z" fill="#dcdcdc" stroke="#444" stroke-width="0.7"/></g><g transform="translate(4 -1.5) scale(0.62)"><path d="M0,-6 l6,-2.5 l0,7 l-6,3z" fill="#f4f4f4" stroke="#444" stroke-width="0.7"/><path d="M-6,-8.5 l6,2.5 v7.5 l-6,-3z" fill="#e0e0e0" stroke="#444" stroke-width="0.7"/><path d="M-6,-8.5 l6,-2 l6,2 l-6,2.5z" fill="#f4f4f4" stroke="#444" stroke-width="0.7"/></g><path d="M-8.1,5 h5.2 M-5.5,2.4 v5.2" stroke="#58c820" stroke-width="2.2" fill="none"/><path d="M1,5 q3.5,-3.5 6,0 q1.5,3 -3,5" fill="none" stroke="#3a6ad0" stroke-width="1.7"/><path d="M-0.2,3.4 l3.2,-0.3 l-1,3z" fill="#3a6ad0"/></g>
<g transform="translate(638.05 78.5) scale(1.08)"><g transform="translate(-4 -1.5) scale(0.62)"><path d="M0,-6 l6,-2.5 l0,7 l-6,3z" fill="#b4b4b4" stroke="#444" stroke-width="0.7"/><path d="M-6,-8.5 l6,2.5 v7.5 l-6,-3z" fill="#8c8c8c" stroke="#444" stroke-width="0.7"/><path d="M-6,-8.5 l6,-2 l6,2 l-6,2.5z" fill="#dcdcdc" stroke="#444" stroke-width="0.7"/></g><g transform="translate(4 -1.5) scale(0.62)"><path d="M0,-6 l6,-2.5 l0,7 l-6,3z" fill="#f4f4f4" stroke="#444" stroke-width="0.7"/><path d="M-6,-8.5 l6,2.5 v7.5 l-6,-3z" fill="#e0e0e0" stroke="#444" stroke-width="0.7"/><path d="M-6,-8.5 l6,-2 l6,2 l-6,2.5z" fill="#f4f4f4" stroke="#444" stroke-width="0.7"/></g><rect x="-8" y="-3" width="5.6" height="11" rx="1" fill="#111"/><rect x="2.4" y="-3" width="5.6" height="11" rx="1" fill="#111"/><circle cx="-5.2" cy="0" r="2" fill="#f0c000"/><circle cx="-5.2" cy="5" r="2" fill="#20c020"/><circle cx="5.2" cy="0" r="2" fill="#e01010"/><circle cx="5.2" cy="5" r="2" fill="#f0b000"/></g>
<g transform="translate(664.1 78.5) scale(1.08)"><g transform="translate(-4 -1.5) scale(0.62)"><path d="M0,-6 l6,-2.5 l0,7 l-6,3z" fill="#b4b4b4" stroke="#444" stroke-width="0.7"/><path d="M-6,-8.5 l6,2.5 v7.5 l-6,-3z" fill="#8c8c8c" stroke="#444" stroke-width="0.7"/><path d="M-6,-8.5 l6,-2 l6,2 l-6,2.5z" fill="#dcdcdc" stroke="#444" stroke-width="0.7"/></g><g transform="translate(4 -1.5) scale(0.62)"><path d="M0,-6 l6,-2.5 l0,7 l-6,3z" fill="#f4f4f4" stroke="#444" stroke-width="0.7"/><path d="M-6,-8.5 l6,2.5 v7.5 l-6,-3z" fill="#e0e0e0" stroke="#444" stroke-width="0.7"/><path d="M-6,-8.5 l6,-2 l6,2 l-6,2.5z" fill="#f4f4f4" stroke="#444" stroke-width="0.7"/></g><g transform="translate(0 1.5)" ><path d="M-6,2 a6.5,5.5 0 0 1 11,-4 l2,-1.6 v6 h-6.4 l2.2,-2 a3.6,3 0 0 0 -5.8,2z" fill="#58c030" stroke="#2a8a18" stroke-width="0.6"/><path d="M6.5,3 a6.5,5.5 0 0 1 -11,4 l-2,1.6 v-6 h6.4 l-2.2,2 a3.6,3 0 0 0 5.8,-2z" fill="#f4e020" stroke="#b09a00" stroke-width="0.6"/></g></g>
<g transform="translate(690.15 78.5) scale(1.08)"><g transform="translate(-4 -1.5) scale(0.62)"><path d="M0,-6 l6,-2.5 l0,7 l-6,3z" fill="#b4b4b4" stroke="#444" stroke-width="0.7"/><path d="M-6,-8.5 l6,2.5 v7.5 l-6,-3z" fill="#8c8c8c" stroke="#444" stroke-width="0.7"/><path d="M-6,-8.5 l6,-2 l6,2 l-6,2.5z" fill="#dcdcdc" stroke="#444" stroke-width="0.7"/></g><g transform="translate(4 -1.5) scale(0.62)"><path d="M0,-6 l6,-2.5 l0,7 l-6,3z" fill="#f4f4f4" stroke="#444" stroke-width="0.7"/><path d="M-6,-8.5 l6,2.5 v7.5 l-6,-3z" fill="#e0e0e0" stroke="#444" stroke-width="0.7"/><path d="M-6,-8.5 l6,-2 l6,2 l-6,2.5z" fill="#f4f4f4" stroke="#444" stroke-width="0.7"/></g><path d="M-8.1,2.5 h5.2 M-5.5,-0.1 v5.2" stroke="#58c820" stroke-width="2.2" fill="none"/><path d="M-3,8 l5,-7" stroke="#222" stroke-width="1.1"/><path d="M1.8,7 h6.4" stroke="#e8d800" stroke-width="2.2" fill="none"/></g>
<g transform="translate(716.2 78.5) scale(1.08)"><ellipse cx="3.5" cy="7.3" rx="6" ry="2" fill="#555" opacity="0.45"/><path d="M-5.5,-6.5 v13 a5.5,2.2 0 0 0 11,0 v-13" fill="url(#icb)" stroke="#10204a" stroke-width="0.8"/><path d="M-5.5,6.5 a5.5,2.2 0 0 1 11,0" fill="none" stroke="#10204a" stroke-width="0.56" opacity="0.6"/><ellipse cx="0" cy="-6.5" rx="5.5" ry="2.2" fill="#8fb4f0" stroke="#10204a" stroke-width="0.8"/><path d="M0,-4 v11" stroke="#101830" stroke-width="1.2" stroke-dasharray="2.4 2"/></g>
<g transform="translate(742.25 78.5) scale(1.08)"><ellipse cx="3.5" cy="7.3" rx="6" ry="2" fill="#555" opacity="0.45"/><path d="M-5.5,-6.5 v13 a5.5,2.2 0 0 0 11,0 v-13" fill="url(#icb)" stroke="#10204a" stroke-width="0.8"/><path d="M-5.5,6.5 a5.5,2.2 0 0 1 11,0" fill="none" stroke="#10204a" stroke-width="0.56" opacity="0.6"/><ellipse cx="0" cy="-6.5" rx="5.5" ry="2.2" fill="#8fb4f0" stroke="#10204a" stroke-width="0.8"/><path d="M-2.6,-4 v12 M2.6,-4 v12" stroke="#f4e86a" stroke-width="1.6"/><path d="M0,-4 v12" stroke="#d8dcf0" stroke-width="1.4"/></g>
<g transform="translate(768.3 78.5) scale(1.08)"><ellipse cx="3.5" cy="7.3" rx="6" ry="2" fill="#555" opacity="0.45"/><path d="M-5.5,-6.5 v13 a5.5,2.2 0 0 0 11,0 v-13" fill="url(#icl)" stroke="#30d8f0" stroke-width="1"/><path d="M-5.5,6.5 a5.5,2.2 0 0 1 11,0" fill="none" stroke="#30d8f0" stroke-width="0.7" opacity="0.6"/><ellipse cx="0" cy="-6.5" rx="5.5" ry="2.2" fill="#eef4ff" stroke="#30d8f0" stroke-width="1"/><path d="M-4,1 l3,4 l6,-8" fill="none" stroke="#28a828" stroke-width="2.6"/></g>
<g transform="translate(794.35 78.5) scale(1.08)"><ellipse cx="3.5" cy="7.3" rx="6" ry="2" fill="#555" opacity="0.45"/><path d="M-5.5,-6.5 v13 a5.5,2.2 0 0 0 11,0 v-13" fill="url(#icl)" stroke="#30d8f0" stroke-width="1"/><path d="M-5.5,6.5 a5.5,2.2 0 0 1 11,0" fill="none" stroke="#30d8f0" stroke-width="0.7" opacity="0.6"/><ellipse cx="0" cy="-6.5" rx="5.5" ry="2.2" fill="#eef4ff" stroke="#30d8f0" stroke-width="1"/><rect x="3" y="-9.5" width="5" height="5" fill="#f8d8a0" stroke="#e08000" stroke-width="1.2"/></g>
<g transform="translate(820.4 78.5) scale(1.08)"><path d="M-5.5,-6.5 v13 a5.5,2.2 0 0 0 11,0 v-13" fill="#e4eefc" stroke="#6aa8e8" stroke-width="0.9"/><path d="M-5.5,6.5 a5.5,2.2 0 0 1 11,0" fill="none" stroke="#6aa8e8" stroke-width="0.63" opacity="0.6"/><ellipse cx="0" cy="-6.5" rx="5.5" ry="2.2" fill="#e4eefc" stroke="#6aa8e8" stroke-width="0.9"/><path d="M-3.4,-5 l2,11 M0,-4.6 l2,11 M3,-5 l-4,11" stroke="#7ab4ec" stroke-width="0.6" fill="none"/></g>
<g transform="translate(846.45 78.5) scale(1.08)"><path d="M-8,-3 l8,-4 l8,4 l-8,11z" fill="#1a3a8a" stroke="#0a1a4a" stroke-width="0.7"/><path d="M-8,-3 l8,-4 l8,4 l-8,3z" fill="#6a9ae8" stroke="#0a1a4a" stroke-width="0.6"/><path d="M0,0 v8" stroke="#0a1a4a" stroke-width="0.6"/><path d="M0,0 l8,-3 l-8,11z" fill="#2c58b8"/></g>
<g transform="translate(888 78.5) scale(1.08)"><g transform="translate(-1 -1) scale(0.95)"><path d="M2.5,3 l5.5,5.5" stroke="#7a7a7a" stroke-width="2.6" stroke-linecap="round"/><circle cx="-1" cy="-1.5" r="5.2" fill="url(#icglass)" stroke="#8a8e98" stroke-width="1.3"/></g><g transform="translate(4.5 8) scale(0.6)"><path d="M0,-6 l6,-2.5 l0,7 l-6,3z" fill="#777" stroke="#444" stroke-width="0.7"/><path d="M-6,-8.5 l6,2.5 v7.5 l-6,-3z" fill="#555" stroke="#444" stroke-width="0.7"/><path d="M-6,-8.5 l6,-2 l6,2 l-6,2.5z" fill="#888" stroke="#444" stroke-width="0.7"/></g><path d="M-9,-8 h3.6 M-7.2,-9.8 v3.6 M-9,-4.6 h3.6" stroke="#111" stroke-width="0.9"/></g>
<g transform="translate(914.05 78.5) scale(1.08)"><g transform="translate(-1 -1) scale(0.95)"><path d="M2.5,3 l5.5,5.5" stroke="#7a7a7a" stroke-width="2.6" stroke-linecap="round"/><circle cx="-1" cy="-1.5" r="5.2" fill="url(#icglass)" stroke="#8a8e98" stroke-width="1.3"/></g><g transform="translate(4.5 8) scale(0.6)"><path d="M0,-6 l6,-2.5 l0,7 l-6,3z" fill="#777" stroke="#444" stroke-width="0.7"/><path d="M-6,-8.5 l6,2.5 v7.5 l-6,-3z" fill="#555" stroke="#444" stroke-width="0.7"/><path d="M-6,-8.5 l6,-2 l6,2 l-6,2.5z" fill="#888" stroke="#444" stroke-width="0.7"/></g><path d="M-8,-8 l3,3" stroke="#38b028" stroke-width="1.4"/><rect x="-9.3" y="-9.3" width="2.6" height="2.6" fill="#38b028"/><path d="M-8,8 l3,-3" stroke="#38b028" stroke-width="1.4"/><rect x="-9.3" y="6.7" width="2.6" height="2.6" fill="#38b028"/><path d="M8,-8 l-3,3" stroke="#38b028" stroke-width="1.4"/><rect x="6.7" y="-9.3" width="2.6" height="2.6" fill="#38b028"/><path d="M8,8 l-3,-3" stroke="#38b028" stroke-width="1.4"/><rect x="6.7" y="6.7" width="2.6" height="2.6" fill="#38b028"/></g>
<g transform="translate(940.1 78.5) scale(1.08)"><rect x="-6" y="-5" width="12" height="10" fill="#e8eefc" stroke="#223" stroke-width="0.9"/><path d="M-3,-2.6 v5.6 M3,-2.6 v5.6 M-4,-1.6 l1,-1 M2,-1.6 l1,-1" stroke="#111" stroke-width="1.1"/><circle cx="0" cy="-0.8" r="0.7"/><circle cx="0" cy="1.8" r="0.7"/><path d="M-8,-8 l3,3" stroke="#38b028" stroke-width="1.4"/><rect x="-9.3" y="-9.3" width="2.6" height="2.6" fill="#38b028"/><path d="M-8,8 l3,-3" stroke="#38b028" stroke-width="1.4"/><rect x="-9.3" y="6.7" width="2.6" height="2.6" fill="#38b028"/><path d="M8,-8 l-3,3" stroke="#38b028" stroke-width="1.4"/><rect x="6.7" y="-9.3" width="2.6" height="2.6" fill="#38b028"/><path d="M8,8 l-3,-3" stroke="#38b028" stroke-width="1.4"/><rect x="6.7" y="6.7" width="2.6" height="2.6" fill="#38b028"/></g>
<g transform="translate(966.15 78.5) scale(1.08)"><path d="M-6,6 l10,-10" stroke="#28a828" stroke-width="2"/><path d="M8,-8 l-6.4,1.6 l4.8,4.8z" fill="#28a828"/><circle cx="-6" cy="6" r="2.4" fill="url(#icgr)" stroke="#444" stroke-width="0.6"/></g>
<g transform="translate(992.2 78.5) scale(1.08)"><g transform="rotate(60)"><g transform="scale(1)"><path d="M-7,-1 a7,7 0 0 1 12,-4.5 l2,-2 v7 h-7 l2.3,-2.3 a4,4 0 0 0 -6.8,3z" fill="#58d038" stroke="#1f9a16" stroke-width="0.6"/><path d="M7,1 a7,7 0 0 1 -12,4.5 l-2,2 v-7 h7 l-2.3,2.3 a4,4 0 0 0 6.8,-3z" fill="#1f9a16" stroke="#1f9a16" stroke-width="0.6"/></g></g></g>
<g transform="translate(1018.25 78.5) scale(1.08)"><g transform="translate(0 -5) scale(0.8)"><path d="M-10,2 Q-5,-4.6 0.5,-4.6 Q6.5,-4.6 10,0.6 Q5,3.6 0,3.6 Q-5.5,3.6 -10,2Z" fill="#b9bdd6" stroke="#6a6a88" stroke-width="0.5"/><ellipse cx="0.5" cy="-0.6" rx="4.3" ry="3.8" fill="url(#iceye)"/><circle cx="0.5" cy="-0.6" r="1.7" fill="#0a0a20"/><path d="M-10,1.6 Q-4.5,-6.4 1,-6 Q7.5,-5.6 10.2,0" fill="none" stroke="#34344e" stroke-width="1.9"/><path d="M-7,-3.4 l-1.6,-1.8 M-3.6,-5.4 l-0.8,-2 M0.6,-6 l0,-2 M4.6,-5.4 l1,-1.8 M8,-3.2 l1.6,-1.4" stroke="#34344e" stroke-width="0.8"/><circle cx="-0.8" cy="-2" r="0.9" fill="#e8f0ff"/></g><circle cx="0" cy="3" r="5.6" fill="url(#icsm)" stroke="#b88a10" stroke-width="0.5"/><circle cx="-2" cy="1.6" r="0.7"/><circle cx="2" cy="1.6" r="0.7"/><path d="M-2.6,4.2 q2.6,2.6 5.2,0" fill="none" stroke="#6a4a00" stroke-width="0.7"/></g>
<g transform="translate(1062 78.5) scale(1.08)"><g transform="translate(0 0) scale(1)"><path d="M-7,2 l8,-5 l8,4 l-8,5z" fill="#e8ecf8" stroke="#b0b4c8" stroke-width="0.6"/><path d="M-3,3 v-9" stroke="#1060e0" stroke-width="1.6"/><path d="M-3,-9 l-2,3.4 h4z" fill="#1060e0"/><path d="M-3,3 l7,-5" stroke="#20b020" stroke-width="1.6"/><path d="M6,-3.6 l-3.8,0.6 l2,2.6z" fill="#20b020"/><path d="M-3,3 l7,4" stroke="#e02020" stroke-width="1.6"/><path d="M6.4,8.2 l-1.6,-3.4 l-2,3z" fill="#e02020"/><circle cx="-3" cy="3" r="1.6" fill="#eee" stroke="#666" stroke-width="0.5"/></g></g>
<g transform="translate(1088.05 78.5) scale(1.08)"><g transform="translate(2 -3) scale(0.7)"><path d="M-7,2 l8,-5 l8,4 l-8,5z" fill="#e8ecf8" stroke="#b0b4c8" stroke-width="0.6"/><path d="M-3,3 v-9" stroke="#1060e0" stroke-width="1.6"/><path d="M-3,-9 l-2,3.4 h4z" fill="#1060e0"/><path d="M-3,3 l7,-5" stroke="#20b020" stroke-width="1.6"/><path d="M6,-3.6 l-3.8,0.6 l2,2.6z" fill="#20b020"/><path d="M-3,3 l7,4" stroke="#e02020" stroke-width="1.6"/><path d="M6.4,8.2 l-1.6,-3.4 l-2,3z" fill="#e02020"/><circle cx="-3" cy="3" r="1.6" fill="#eee" stroke="#666" stroke-width="0.5"/></g><path d="M-8,8 l6,-6" stroke="#28a828" stroke-width="2"/><path d="M0,-0.6 l-5,1.2 l3.8,3.8z" fill="#28a828"/><rect x="0" y="3.5" width="7" height="4.5" fill="#ddd" stroke="#667" stroke-width="0.8"/></g>
<g transform="translate(1114.1 78.5) scale(1.08)"><g transform="translate(3 -3) scale(0.7)"><path d="M-7,2 l8,-5 l8,4 l-8,5z" fill="#e8ecf8" stroke="#b0b4c8" stroke-width="0.6"/><path d="M-3,3 v-9" stroke="#1060e0" stroke-width="1.6"/><path d="M-3,-9 l-2,3.4 h4z" fill="#1060e0"/><path d="M-3,3 l7,-5" stroke="#20b020" stroke-width="1.6"/><path d="M6,-3.6 l-3.8,0.6 l2,2.6z" fill="#20b020"/><path d="M-3,3 l7,4" stroke="#e02020" stroke-width="1.6"/><path d="M6.4,8.2 l-1.6,-3.4 l-2,3z" fill="#e02020"/><circle cx="-3" cy="3" r="1.6" fill="#eee" stroke="#666" stroke-width="0.5"/></g><path d="M-8,0 l5,7 M-5,-3 l5,7" stroke="#28a828" stroke-width="2.2"/><path d="M-9.4,-2 l4.6,1.2 l-3.4,2.6z M2.6,10.4 l-1,-4.6 l-3,3z" fill="#28a828"/></g>
<g transform="translate(1157 78.5) scale(1.08)"><rect x="-8.5" y="-8.5" width="17" height="17" fill="#444"/><rect x="-8" y="-8" width="5" height="5" fill="#00d0f0"/><rect x="-2.5" y="-8" width="5" height="5" fill="#f0f000"/><rect x="3" y="-8" width="5" height="5" fill="#30c030"/><rect x="-8" y="-2.5" width="5" height="5" fill="#f08000"/><rect x="-2.5" y="-2.5" width="5" height="5" fill="#a06020"/><rect x="3" y="-2.5" width="5" height="5" fill="#f000f0"/><rect x="-8" y="3" width="5" height="5" fill="#0020f0"/><rect x="-2.5" y="3" width="5" height="5" fill="#20a020"/><rect x="3" y="3" width="5" height="5" fill="#808080"/></g>
<g transform="translate(1183.05 78.5) scale(1.08)"><rect x="-7" y="-9" width="14" height="18" fill="#eef2fc" stroke="#7a86a8" stroke-width="0.9"/><rect x="-5" y="-7" width="10" height="2" fill="#f0b040"/><rect x="-5" y="-4" width="10" height="1.6" fill="#80b0f0"/><rect x="-5" y="-1" width="3" height="3" fill="#30c0f0"/><rect x="-1.5" y="-1" width="3" height="3" fill="#f0e020"/><rect x="2" y="-1" width="3" height="3" fill="#30c030"/><rect x="-5" y="2.5" width="3" height="3" fill="#f08000"/><rect x="-1.5" y="2.5" width="3" height="3" fill="#c02020"/><rect x="2" y="2.5" width="3" height="3" fill="#f000f0"/><rect x="-5" y="6" width="3" height="3" fill="#2030e0"/><rect x="-1.5" y="6" width="3" height="3" fill="#20a020"/><rect x="2" y="6" width="3" height="3" fill="#808080"/></g>
<g transform="translate(1209.1 78.5) scale(1.08)"><circle cx="0" cy="0" r="9" fill="#5a8a3a" stroke="#3a5a20" stroke-width="0.6"/><path d="M-5,5.5 l9,-9.5" stroke="#e8e8e8" stroke-width="2.4" stroke-linecap="round"/><path d="M5,5.5 l-9,-9.5" stroke="#b8c4d8" stroke-width="2.2" stroke-linecap="round"/><circle cx="4.6" cy="-4.6" r="2.2" fill="none" stroke="#e8e8e8" stroke-width="1.3"/></g>
<g transform="translate(1235.15 78.5) scale(1.08)"><rect x="-8.5" y="-8.5" width="17" height="17" fill="#c8dcf8" stroke="#3a5a9a" stroke-width="1"/><rect x="-8.5" y="-8.5" width="17" height="3.4" fill="#2a58b8"/><path d="M-6,-3 h12" stroke="#c09020" stroke-width="1.6" stroke-dasharray="2 1.4"/><path d="M-4,6 l8,-7" stroke="#ddd" stroke-width="2" stroke-linecap="round"/><path d="M4,6 l-8,-7" stroke="#4a7ad0" stroke-width="2" stroke-linecap="round"/></g>
<g transform="translate(1261.2 78.5) scale(1.08)"><rect x="-7.5" y="-6.5" width="15" height="14" fill="none" stroke="#222" stroke-width="1.2" stroke-dasharray="1.6 1.6"/><path d="M-4,-2 q3,-6 8,-5 l4,3 l-3,4 l-5,1z" fill="#e8a860" stroke="#8a5a20" stroke-width="0.6"/><circle cx="-4" cy="3.6" r="2.4" fill="#f0e020" stroke="#2040d0" stroke-width="0.8"/><path d="M-6,3.6 h4 M-4,1.6 v4" stroke="#2040d0" stroke-width="0.8"/></g>
<g transform="translate(1287.25 78.5) scale(1.08)"><path d="M-4,-7 l12,-2 l-3,14 l-13,3z" fill="#5878d8" stroke="#2a3a9a" stroke-width="0.8"/><path d="M-6,-2 l12.6,-2.4 M-7,2.6 l12.6,-2.4 M0,-7.6 l-3.4,15 M4,-8.2 l-3.4,15" stroke="#e04848" stroke-width="0.8"/></g>
<g transform="translate(17.4 143) scale(1.05)"><path d="M-9,-6 l5,2 M-9,-2 l4,1.4 M-8,2 l4,0" stroke="#9aa" stroke-width="1"/><g transform="translate(1 0) scale(1)"><path d="M2.5,3 l5.5,5.5" stroke="#7a7a7a" stroke-width="2.6" stroke-linecap="round"/><circle cx="-1" cy="-1.5" r="5.2" fill="url(#icglass)" stroke="#8a8e98" stroke-width="1.3"/></g></g>
<g transform="translate(43 143) scale(1.05)"><path d="M-8,-6 l12,12 M-5,-9 l12,12" stroke="#2a5ad0" stroke-width="1.2"/><g transform="translate(0 0)"><path d="M-6,7 l2,-5 l8,-9 l3,2.6 l-8,9z" fill="#e8a030" stroke="#6a3c10" stroke-width="0.7"/><path d="M-6,7 l2,-5 l3,2.6z" fill="#f4dcae" stroke="#6a3c10" stroke-width="0.5"/><path d="M4,-7 l3,2.6 l1.4,-1.6 l-3,-2.6z" fill="#d02020"/><path d="M-6,7 l0.8,-2 l1.2,1z" fill="#222"/></g></g>
<path d="M47,131.5 h5 l-2.5,3z" fill="#000"/>
<g transform="translate(17.4 169) scale(1.05)"><rect x="-6" y="-5" width="12" height="10" fill="url(#icl)" stroke="#223" stroke-width="0.9"/><path d="M-8,-8 l3,3" stroke="#38b028" stroke-width="1.4"/><rect x="-9.3" y="-9.3" width="2.6" height="2.6" fill="#38b028"/><path d="M-8,8 l3,-3" stroke="#38b028" stroke-width="1.4"/><rect x="-9.3" y="6.7" width="2.6" height="2.6" fill="#38b028"/><path d="M8,-8 l-3,3" stroke="#38b028" stroke-width="1.4"/><rect x="6.7" y="-9.3" width="2.6" height="2.6" fill="#38b028"/><path d="M8,8 l-3,-3" stroke="#38b028" stroke-width="1.4"/><rect x="6.7" y="6.7" width="2.6" height="2.6" fill="#38b028"/></g>
<g transform="translate(43 169) scale(1.05)"><path d="M-2,-6 q-7,0 -5,5 q2,4 9,3 q6,3 1,6" fill="none" stroke="#2a5ad0" stroke-width="1.6"/><g transform="translate(1 -1)"><path d="M-6,7 l2,-5 l8,-9 l3,2.6 l-8,9z" fill="#e8a030" stroke="#6a3c10" stroke-width="0.7"/><path d="M-6,7 l2,-5 l3,2.6z" fill="#f4dcae" stroke="#6a3c10" stroke-width="0.5"/><path d="M4,-7 l3,2.6 l1.4,-1.6 l-3,-2.6z" fill="#d02020"/><path d="M-6,7 l0.8,-2 l1.2,1z" fill="#222"/></g></g>
<path d="M47,157.5 h5 l-2.5,3z" fill="#000"/>
<g transform="translate(17.4 195) scale(1.05)"><g transform="translate(-1 -1) scale(0.95)"><path d="M2.5,3 l5.5,5.5" stroke="#7a7a7a" stroke-width="2.6" stroke-linecap="round"/><circle cx="-1" cy="-1.5" r="5.2" fill="url(#icglass)" stroke="#8a8e98" stroke-width="1.3"/></g><g transform="translate(4.5 8) scale(0.6)"><path d="M0,-6 l6,-2.5 l0,7 l-6,3z" fill="#777" stroke="#444" stroke-width="0.7"/><path d="M-6,-8.5 l6,2.5 v7.5 l-6,-3z" fill="#555" stroke="#444" stroke-width="0.7"/><path d="M-6,-8.5 l6,-2 l6,2 l-6,2.5z" fill="#888" stroke="#444" stroke-width="0.7"/></g><path d="M-9,-8 h3.6 M-7.2,-9.8 v3.6 M-9,-4.6 h3.6" stroke="#111" stroke-width="0.9"/></g>
<g transform="translate(43 195) scale(1.05)"><rect x="-7" y="-7" width="13" height="13" fill="#fffef0" stroke="#e8d800" stroke-width="1.6"/><path d="M-4,-1 l3,4 l7,-8" fill="none" stroke="#28a828" stroke-width="2.8"/></g>
<path d="M21.5,183.5 h5 l-2.5,3z" fill="#000"/>
<path d="M47,183.5 h5 l-2.5,3z" fill="#000"/>
<g transform="translate(17.4 221) scale(1.05)"><g transform="translate(0 0) scale(1)"><path d="M-7,2 l8,-5 l8,4 l-8,5z" fill="#e8ecf8" stroke="#b0b4c8" stroke-width="0.6"/><path d="M-3,3 v-9" stroke="#1060e0" stroke-width="1.6"/><path d="M-3,-9 l-2,3.4 h4z" fill="#1060e0"/><path d="M-3,3 l7,-5" stroke="#20b020" stroke-width="1.6"/><path d="M6,-3.6 l-3.8,0.6 l2,2.6z" fill="#20b020"/><path d="M-3,3 l7,4" stroke="#e02020" stroke-width="1.6"/><path d="M6.4,8.2 l-1.6,-3.4 l-2,3z" fill="#e02020"/><circle cx="-3" cy="3" r="1.6" fill="#eee" stroke="#666" stroke-width="0.5"/></g></g>
<g transform="translate(43 221) scale(1.05)"><path d="M-8,2 q3,-10 7,-1 q4,9 9,2" fill="none" stroke="#2a5ad0" stroke-width="1.6"/><g transform="translate(1 -1)"><path d="M-6,7 l2,-5 l8,-9 l3,2.6 l-8,9z" fill="#e8a030" stroke="#6a3c10" stroke-width="0.7"/><path d="M-6,7 l2,-5 l3,2.6z" fill="#f4dcae" stroke="#6a3c10" stroke-width="0.5"/><path d="M4,-7 l3,2.6 l1.4,-1.6 l-3,-2.6z" fill="#d02020"/><path d="M-6,7 l0.8,-2 l1.2,1z" fill="#222"/></g></g>
<path d="M21.5,209.5 h5 l-2.5,3z" fill="#000"/>
<path d="M47,209.5 h5 l-2.5,3z" fill="#000"/>
<g transform="translate(17.4 247) scale(1.05)"><path d="M-8,-6 h9 l1.5,1.5 h-9z M-8,-3.4 h9 l1.5,1.5 h-9z" fill="#a8b4e8" stroke="#5868b0" stroke-width="0.5"/><ellipse cx="-1" cy="4" rx="7.5" ry="4.6" fill="#d8b890" stroke="#6a4a2a" stroke-width="0.7"/><circle cx="-4" cy="4.6" r="1.6" fill="#2050e0"/><circle cx="0" cy="6" r="1.6" fill="#20b030"/><circle cx="3.6" cy="3.4" r="1.6" fill="#e02020"/><path d="M1,2 l7,-10" stroke="#8a4a1a" stroke-width="1.6"/></g>
<g transform="translate(43 247) scale(1.05)"><path d="M-5,-5 l13,-3 l-3,12 l-13,4z" fill="url(#icbl)" stroke="#2a5ad0" stroke-width="0.8"/><path d="M1.4,-6.6 l-3,14 M-6.4,1 l13,-3.4" stroke="#e8f0ff" stroke-width="1"/></g>
<path d="M21.5,235.5 h5 l-2.5,3z" fill="#000"/>
<path d="M47,235.5 h5 l-2.5,3z" fill="#000"/>
<g transform="translate(17.4 273) scale(1.05)"><g transform="scale(1)"><path d="M-7,-1 a7,7 0 0 1 12,-4.5 l2,-2 v7 h-7 l2.3,-2.3 a4,4 0 0 0 -6.8,3z" fill="#8fbcf0" stroke="#3f82d8" stroke-width="0.6"/><path d="M7,1 a7,7 0 0 1 -12,4.5 l-2,2 v-7 h7 l-2.3,2.3 a4,4 0 0 0 6.8,-3z" fill="#3f82d8" stroke="#3f82d8" stroke-width="0.6"/></g></g>
<g transform="translate(43 273) scale(1.05)"><g transform="translate(0 3) scale(1.15)"><path d="M0,-6 l6,-2.5 l0,7 l-6,3z" fill="#b4b4b4" stroke="#444" stroke-width="0.7"/><path d="M-6,-8.5 l6,2.5 v7.5 l-6,-3z" fill="#8c8c8c" stroke="#444" stroke-width="0.7"/><path d="M-6,-8.5 l6,-2 l6,2 l-6,2.5z" fill="#dcdcdc" stroke="#444" stroke-width="0.7"/></g></g>
<path d="M21.5,261.5 h5 l-2.5,3z" fill="#000"/>
<path d="M47,261.5 h5 l-2.5,3z" fill="#000"/>
<g transform="translate(17.4 299) scale(1.05)"><text x="-6" y="7" font-family="Liberation Sans, sans-serif" font-weight="bold" font-size="20" fill="#3a6ad0" stroke="#1a3a8a" stroke-width="0.4">?</text></g>
<g transform="translate(43 299) scale(1.05)"><path d="M-8,-6 v14 M8,-6 v14" stroke="#222" stroke-width="1.2"/><path d="M-7,-3 h14" stroke="#e8d000" stroke-width="1.6"/><path d="M-8,-3 l3.4,-2 v4z M8,-3 l-3.4,-2 v4z" fill="#e8d000" stroke="#222" stroke-width="0.4"/></g>
<path d="M21.5,287.5 h5 l-2.5,3z" fill="#000"/>
<path d="M47,287.5 h5 l-2.5,3z" fill="#000"/>
<g transform="translate(17.4 325) scale(1.05)"><path d="M-6,-4 h12 l-1.4,12 h-9.2z" fill="#b8d8e8" stroke="#4a7a9a" stroke-width="0.8"/><ellipse cx="0" cy="-4" rx="6.4" ry="2" fill="#d8ecf4" stroke="#4a7a9a" stroke-width="0.8"/><path d="M-2,-8 l2,-2 l2,2z" fill="#e8e000"/><path d="M-2,0 l2,3 l2,-3 M0,3 v3" stroke="#48a838" stroke-width="1" fill="none"/></g>
<g transform="translate(43 325) scale(1.05)"><path d="M-8,-1 l6,-6 v3.6 q8,0 8.5,9 q-2.5,-4.6 -8.5,-4.4 v3.8z" fill="url(#icgr)" stroke="#8a8a8a" stroke-width="0.6"/></g>
<path d="M21.5,313.5 h5 l-2.5,3z" fill="#000"/>
<path d="M47,313.5 h5 l-2.5,3z" fill="#000"/>
<g transform="translate(17.4 351) scale(1.05)"><path d="M-8,-8 v16" stroke="#333" stroke-width="1.6"/><circle cx="1" cy="0" r="6" fill="none" stroke="#b85a10" stroke-width="1.6"/><path d="M1,-8 v16 M-7,0 h16 M-4.6,-5.6 l11.2,11.2 M-4.6,5.6 l11.2,-11.2" stroke="#b85a10" stroke-width="1"/><path d="M-8,6 l14,3 M-7,9 l12,0" stroke="#f08020" stroke-width="1.8"/></g>
<g transform="translate(43 351) scale(1.05)"><path d="M-8,6 v-11 h5 l1.5,1.6 h7.5 v3" fill="url(#icfold)" stroke="#a07818" stroke-width="0.7"/><path d="M-8,6 l3,-7 h13 l-3,7z" fill="#ffe080" stroke="#a07818" stroke-width="0.7"/><path d="M1,-4 l3,-4 l3,4z" fill="#38b030"/><rect x="0" y="3" width="8" height="6" fill="#f8f8f8" stroke="#334" stroke-width="0.7"/></g>
<path d="M21.5,339.5 h5 l-2.5,3z" fill="#000"/>
<g transform="translate(76 125.4) scale(1.1)"><rect x="-8" y="-7" width="16" height="3.4" fill="#4a6090"/><rect x="-8" y="-1.7" width="16" height="3.4" fill="#4a6090"/><rect x="-8" y="3.6" width="16" height="3.4" fill="#4a6090"/></g>
<g transform="translate(104 125.4) scale(1.1)"><rect x="-6" y="-5" width="12" height="10" fill="url(#icl)" stroke="#223" stroke-width="0.9"/><path d="M-8,-8 l3,3" stroke="#38b028" stroke-width="1.4"/><rect x="-9.3" y="-9.3" width="2.6" height="2.6" fill="#38b028"/><path d="M-8,8 l3,-3" stroke="#38b028" stroke-width="1.4"/><rect x="-9.3" y="6.7" width="2.6" height="2.6" fill="#38b028"/><path d="M8,-8 l-3,3" stroke="#38b028" stroke-width="1.4"/><rect x="6.7" y="-9.3" width="2.6" height="2.6" fill="#38b028"/><path d="M8,8 l-3,-3" stroke="#38b028" stroke-width="1.4"/><rect x="6.7" y="6.7" width="2.6" height="2.6" fill="#38b028"/></g>
<g transform="translate(132 125.4) scale(1.1)"><path d="M-9,-6 l5,2 M-9,-2 l4,1.4 M-8,2 l4,0" stroke="#9aa" stroke-width="1"/><g transform="translate(1 0) scale(1)"><path d="M2.5,3 l5.5,5.5" stroke="#7a7a7a" stroke-width="2.6" stroke-linecap="round"/><circle cx="-1" cy="-1.5" r="5.2" fill="url(#icglass)" stroke="#8a8e98" stroke-width="1.3"/></g></g>
<g transform="translate(160 125.4) scale(1.3)"><g transform="translate(0 0) scale(1)"><path d="M-7,2 l8,-5 l8,4 l-8,5z" fill="#e8ecf8" stroke="#b0b4c8" stroke-width="0.6"/><path d="M-3,3 v-9" stroke="#1060e0" stroke-width="1.6"/><path d="M-3,-9 l-2,3.4 h4z" fill="#1060e0"/><path d="M-3,3 l7,-5" stroke="#20b020" stroke-width="1.6"/><path d="M6,-3.6 l-3.8,0.6 l2,2.6z" fill="#20b020"/><path d="M-3,3 l7,4" stroke="#e02020" stroke-width="1.6"/><path d="M6.4,8.2 l-1.6,-3.4 l-2,3z" fill="#e02020"/><circle cx="-3" cy="3" r="1.6" fill="#eee" stroke="#666" stroke-width="0.5"/></g></g>
<g transform="translate(188.4 125.4) scale(1)"><path d="M0.8,-9 L0.8,0.8 M-9.2,3.8 L0.8,0.8 L9.3,3.4" fill="none" stroke="#111" stroke-width="1"/><path d="M-9.5,-5.6 L0.8,-9 L9.5,-5.9 L-0.6,-1.6Z" fill="url(#icgcube)"/><path d="M-9.5,-5.6 L0.8,-9 L9.5,-5.9 L-0.6,-1.6Z M-9.5,-5.6 L-0.6,-1.6 L-0.4,9.3 L-9.2,3.8Z M-0.6,-1.6 L9.5,-5.9 L9.3,3.4 L-0.4,9.3Z" fill="none" stroke="#111" stroke-width="1.2" stroke-linejoin="round"/></g>
<g transform="translate(216.4 125.4) scale(1)"><path d="M-9.2,3.8 L0.8,0.8 L9.3,3.4 L-0.4,9.3Z" fill="url(#icgcube)"/><path d="M0.8,-9 L0.8,0.8 M-9.2,3.8 L0.8,0.8 L9.3,3.4" fill="none" stroke="#111" stroke-width="1"/><path d="M-9.5,-5.6 L0.8,-9 L9.5,-5.9 L-0.6,-1.6Z M-9.5,-5.6 L-0.6,-1.6 L-0.4,9.3 L-9.2,3.8Z M-0.6,-1.6 L9.5,-5.9 L9.3,3.4 L-0.4,9.3Z" fill="none" stroke="#111" stroke-width="1.2" stroke-linejoin="round"/></g>
<g transform="translate(244.4 125.4) scale(1)"><path d="M-9.5,-5.6 L0.8,-9 L0.8,0.8 L-9.2,3.8Z" fill="url(#icgcube)"/><path d="M0.8,-9 L0.8,0.8 M-9.2,3.8 L0.8,0.8 L9.3,3.4" fill="none" stroke="#111" stroke-width="1"/><path d="M-9.5,-5.6 L0.8,-9 L9.5,-5.9 L-0.6,-1.6Z M-9.5,-5.6 L-0.6,-1.6 L-0.4,9.3 L-9.2,3.8Z M-0.6,-1.6 L9.5,-5.9 L9.3,3.4 L-0.4,9.3Z" fill="none" stroke="#111" stroke-width="1.2" stroke-linejoin="round"/></g>
<g transform="translate(272.4 125.4) scale(1)"><path d="M0.8,-9 L0.8,0.8 M-9.2,3.8 L0.8,0.8 L9.3,3.4" fill="none" stroke="#111" stroke-width="1"/><path d="M-0.6,-1.6 L9.5,-5.9 L9.3,3.4 L-0.4,9.3Z" fill="url(#icgcube)"/><path d="M-9.5,-5.6 L0.8,-9 L9.5,-5.9 L-0.6,-1.6Z M-9.5,-5.6 L-0.6,-1.6 L-0.4,9.3 L-9.2,3.8Z M-0.6,-1.6 L9.5,-5.9 L9.3,3.4 L-0.4,9.3Z" fill="none" stroke="#111" stroke-width="1.2" stroke-linejoin="round"/></g>
<g transform="translate(300.4 125.4) scale(1)"><path d="M0.8,-9 L0.8,0.8 M-9.2,3.8 L0.8,0.8 L9.3,3.4" fill="none" stroke="#111" stroke-width="1"/><path d="M-9.5,-5.6 L-0.6,-1.6 L-0.4,9.3 L-9.2,3.8Z" fill="url(#icgcube)"/><path d="M-9.5,-5.6 L0.8,-9 L9.5,-5.9 L-0.6,-1.6Z M-9.5,-5.6 L-0.6,-1.6 L-0.4,9.3 L-9.2,3.8Z M-0.6,-1.6 L9.5,-5.9 L9.3,3.4 L-0.4,9.3Z" fill="none" stroke="#111" stroke-width="1.2" stroke-linejoin="round"/></g>
<g transform="translate(328.4 125.4) scale(1)"><path d="M0.8,-9 L9.5,-5.9 L9.3,3.4 L0.8,0.8Z" fill="url(#icgcube)"/><path d="M0.8,-9 L0.8,0.8 M-9.2,3.8 L0.8,0.8 L9.3,3.4" fill="none" stroke="#111" stroke-width="1"/><path d="M-9.5,-5.6 L0.8,-9 L9.5,-5.9 L-0.6,-1.6Z M-9.5,-5.6 L-0.6,-1.6 L-0.4,9.3 L-9.2,3.8Z M-0.6,-1.6 L9.5,-5.9 L9.3,3.4 L-0.4,9.3Z" fill="none" stroke="#111" stroke-width="1.2" stroke-linejoin="round"/></g>
<g transform="translate(356.4 125.4) scale(1)"><path d="M0.8,-9 L0.8,0.8 M-9.2,3.8 L0.8,0.8 L9.3,3.4" fill="none" stroke="#111" stroke-width="1"/><path d="M-9.5,-5.6 L0.8,-9 L9.5,-5.9 L-0.6,-1.6Z" fill="url(#icgcube)"/><path d="M-9.5,-5.6 L-0.6,-1.6 L-0.4,9.3 L-9.2,3.8Z" fill="url(#icgcube)"/><path d="M-0.6,-1.6 L9.5,-5.9 L9.3,3.4 L-0.4,9.3Z" fill="url(#icgcube)"/><path d="M-9.5,-5.6 L0.8,-9 L9.5,-5.9 L-0.6,-1.6Z M-9.5,-5.6 L-0.6,-1.6 L-0.4,9.3 L-9.2,3.8Z M-0.6,-1.6 L9.5,-5.9 L9.3,3.4 L-0.4,9.3Z" fill="none" stroke="#111" stroke-width="1.2" stroke-linejoin="round"/></g>
<g transform="translate(76 153) scale(0.85)"><path d="M-5.5,-6.5 v13 a5.5,2.2 0 0 0 11,0 v-13" fill="none" stroke="#222" stroke-width="1"/><path d="M-5.5,6.5 a5.5,2.2 0 0 1 11,0" fill="none" stroke="#222" stroke-width="0.7" opacity="0.6"/><ellipse cx="0" cy="-6.5" rx="5.5" ry="2.2" fill="none" stroke="#222" stroke-width="1"/></g>
<g transform="translate(76 181) scale(0.85)"><path d="M-5.5,-6.5 v13 a5.5,2.2 0 0 0 11,0 v-13" fill="none" stroke="#222" stroke-width="1"/><ellipse cx="0" cy="-6.5" rx="5.5" ry="2.2" fill="none" stroke="#222" stroke-width="1"/></g>
<g transform="translate(76 209) scale(0.85)"><ellipse cx="3.5" cy="7.3" rx="6" ry="2" fill="#555" opacity="0.45"/><path d="M-5.5,-6.5 v13 a5.5,2.2 0 0 0 11,0 v-13" fill="url(#icb)" stroke="#10204a" stroke-width="0.8"/><path d="M-5.5,6.5 a5.5,2.2 0 0 1 11,0" fill="none" stroke="#10204a" stroke-width="0.56" opacity="0.6"/><ellipse cx="0" cy="-6.5" rx="5.5" ry="2.2" fill="#8fb4f0" stroke="#10204a" stroke-width="0.8"/></g>
<g transform="translate(76 237) scale(0.85)"><ellipse cx="3.5" cy="7.3" rx="6" ry="2" fill="#555" opacity="0.45"/><path d="M-5.5,-6.5 v13 a5.5,2.2 0 0 0 11,0 v-13" fill="url(#icl)" stroke="#556" stroke-width="0.8"/><path d="M-5.5,6.5 a5.5,2.2 0 0 1 11,0" fill="none" stroke="#556" stroke-width="0.56" opacity="0.6"/><ellipse cx="0" cy="-6.5" rx="5.5" ry="2.2" fill="#eef4ff" stroke="#556" stroke-width="0.8"/></g>
<g transform="translate(76 265) scale(0.85)"><path d="M-5.5,-6.5 v13 a5.5,2.2 0 0 0 11,0 v-13" fill="#f4f4f4" stroke="#222" stroke-width="1"/><path d="M-5.5,6.5 a5.5,2.2 0 0 1 11,0" fill="none" stroke="#222" stroke-width="0.7" opacity="0.6"/><ellipse cx="0" cy="-6.5" rx="5.5" ry="2.2" fill="#f4f4f4" stroke="#222" stroke-width="1"/><path d="M-4,-5 l3,11 M-1,-4.6 l3,11 M2,-5 l2,10 M3.6,-5 l-5,11 M0.5,-4.6 l-4,10" stroke="#222" stroke-width="0.6" fill="none"/></g>
<circle cx="1467.5" cy="1009.5" r="3.6" fill="#e4f0ff" stroke="#2a6ad0" stroke-width="1.3"/><path d="M1465,1012.5 l-3.6,4" stroke="#2a6ad0" stroke-width="1.6"/>
<circle cx="1901" cy="1010" r="6.5" fill="#2a5ac0" stroke="#0a1a4a" stroke-width="0.8"/><path d="M1897,1006 q3,-2 5,0 q-1,3 1,4 q-2,3 -4,1 q0,-3 -2,-5z" fill="#30a830"/><path d="M1903,1012 q2,-1 3,1 l-2,2z" fill="#30a830"/>
<rect x="1181.5" y="1022.5" width="17" height="16" fill="#c4c8d6" stroke="#5a5e78" stroke-width="1"/><g transform="translate(1190 1030.5) scale(0.62)"><g transform="scale(1)"><path d="M-7,-1 a7,7 0 0 1 12,-4.5 l2,-2 v7 h-7 l2.3,-2.3 a4,4 0 0 0 -6.8,3z" fill="#f08890" stroke="#d03848" stroke-width="0.6"/><path d="M7,1 a7,7 0 0 1 -12,4.5 l-2,2 v-7 h7 l-2.3,2.3 a4,4 0 0 0 6.8,-3z" fill="#d03848" stroke="#d03848" stroke-width="0.6"/></g></g>
<path d="M1216,1036 l8,-9" stroke="#8a6ad0" stroke-width="2"/><path d="M1214,1025 l4,3 l-1,-5 l4,3 l1,-4 l2,5 l4,-2 l-3,5" fill="#f0a030" stroke="#c06010" stroke-width="0.6"/>
<g transform="translate(1252 1031) scale(0.7)"><path d="M-8,6 l3,-9 l8,-2 l5,3 l-3,8z" fill="#e8c080" stroke="#8a5a20" stroke-width="0.8"/><rect x="-8" y="2" width="7" height="7" fill="#6a8ad8" stroke="#223" stroke-width="0.8"/></g>
<text x="1277" y="1037.5" font-family="Liberation Sans, sans-serif" font-weight="bold" font-size="17" fill="#3a6ad0">?</text>
<g transform="translate(1316 1032) scale(0.62)"><g transform="translate(-4 2) scale(1)"><path d="M0,-6 l6,-2.5 l0,7 l-6,3z" fill="#6a8ad0" stroke="#444" stroke-width="0.7"/><path d="M-6,-8.5 l6,2.5 v7.5 l-6,-3z" fill="#4a6ab0" stroke="#444" stroke-width="0.7"/><path d="M-6,-8.5 l6,-2 l6,2 l-6,2.5z" fill="#9ab8e8" stroke="#444" stroke-width="0.7"/></g><g transform="translate(6 6) scale(1)"><path d="M0,-6 l6,-2.5 l0,7 l-6,3z" fill="#9aaac8" stroke="#444" stroke-width="0.7"/><path d="M-6,-8.5 l6,2.5 v7.5 l-6,-3z" fill="#7a8aa8" stroke="#444" stroke-width="0.7"/><path d="M-6,-8.5 l6,-2 l6,2 l-6,2.5z" fill="#c8d4e8" stroke="#444" stroke-width="0.7"/></g></g>
<path d="M1305,1026 l6,4 M1305,1034 l6,-3 M1304,1030 h7" stroke="#e02020" stroke-width="1.3"/>
<g transform="translate(1345 1033) scale(0.8)"><path d="M-7,-4 l7,3 v8 l-7,-3z" fill="#4a78c8" stroke="#223" stroke-width="0.7"/><path d="M0,-1 l7,-3 v8 l-7,3z" fill="#8aa8a0" stroke="#223" stroke-width="0.7"/><path d="M-7,-4 l7,-3 l7,3 l-7,3z" fill="#e040e0" stroke="#223" stroke-width="0.7"/></g>
<rect x="1431.5" y="1024.5" width="16" height="13" fill="#e8ecf8" stroke="#5a6a9a" stroke-width="1"/><path d="M1439.5,1024.5 v13 M1431.5,1031 h16" stroke="#5a6a9a" stroke-width="1"/>
<ellipse cx="1405" cy="1038.3" rx="17" ry="2.6" fill="#a05a3a" opacity="0.75"/><path d="M1388,1018 q-6,2 -7,8 q2,3 6,0 l2,8 q3,4 7,2 l1,-3 h10 l1,3 q5,2 8,-2 l2,-9 q5,1 6,-3 q-2,-5 -8,-6z" fill="#fff066" stroke="#e8c830" stroke-width="0.8"/><circle cx="1389" cy="977.5" r="5.8" fill="#b87838"/><circle cx="1424" cy="977.5" r="5.8" fill="#b87838"/><circle cx="1389.4" cy="978" r="3" fill="#eaa090"/><circle cx="1423.6" cy="978" r="3" fill="#eaa090"/><path d="M1405,973 q-1,-6 -4,-7 q-2,-2 1,-2 q4,1 5,7 q1,-5 3,-5 q2,1 0,3 q-2,2 -2,5z" fill="#a86828"/><ellipse cx="1406.7" cy="996.7" rx="26.5" ry="23.6" fill="#b87838"/><ellipse cx="1406.7" cy="999.5" rx="21" ry="16.6" fill="#fff35a" stroke="#f0d020" stroke-width="0.8"/><circle cx="1395.8" cy="994" r="1.5" fill="#5a2a10"/><circle cx="1416.9" cy="994" r="1.5" fill="#5a2a10"/><circle cx="1406.4" cy="997" r="0.9" fill="#5a2a10"/><ellipse cx="1391" cy="999.8" rx="3.6" ry="2.5" fill="#f8a838"/><ellipse cx="1421.6" cy="999.8" rx="3.6" ry="2.5" fill="#f8a838"/><path d="M1392,1015.5 q14,6 30,0 l1,3 q-16,6 -32,0z" fill="#b87838"/><path d="M1418,1018 l-18,13 l2,2 l18,-13z" fill="#a86828"/><circle cx="1396.6" cy="1028.5" r="6.6" fill="#b87838"/><circle cx="1391.5" cy="1023.5" r="2.2" fill="#b87838"/><circle cx="1401.5" cy="1023.5" r="2.2" fill="#b87838"/><circle cx="1394" cy="1028" r="0.8" fill="#4a2008"/><circle cx="1399" cy="1028" r="0.8" fill="#4a2008"/><ellipse cx="1393" cy="1030.6" rx="1.4" ry="1" fill="#f090a0"/><ellipse cx="1400.4" cy="1030.6" rx="1.4" ry="1" fill="#f090a0"/><circle cx="1367.7" cy="1006" r="8.4" fill="#8e5f52"/><path d="M1363.6,1010.2 l4.1,-9.6 l4.1,9.6 M1365.2,1007 h5" fill="none" stroke="#fff" stroke-width="1.5"/><circle cx="1374.7" cy="1026.9" r="8.4" fill="#8e5f52"/><path d="M1371,1022.6 l2.4,-0.9 q1.3,1.4 2.6,0 l2.4,0.9 l2,2.6 l-1.8,1.4 l-1,-1 v6 h-5.8 v-6 l-1,1 l-1.8,-1.4z" fill="#fff"/><path d="M1435.6,973 l5.4,-1.4 l1.6,9 l2.6,-8.6 l3.4,0.6 l0.4,8.6 l3.6,-8.4 l4.6,2 l-6.6,15.4 l-4.6,-0.8 l-0.8,-6.6 l-2.4,6 l-4.8,-0.6z" fill="#fff8e8" stroke="#e8d0a8" stroke-width="0.8"/><circle cx="1441" cy="984" r="1.3" fill="#c08850"/><circle cx="1448" cy="980" r="1.2" fill="#c08850"/><circle cx="1450.6" cy="986" r="1.3" fill="#c08850"/><circle cx="1444.4" cy="977" r="1" fill="#c08850"/><circle cx="1439.5" cy="992.5" r="3.4" fill="#c08850"/><circle cx="1453" cy="992.5" r="3.4" fill="#c08850"/><ellipse cx="1446" cy="1001" rx="10" ry="10.8" fill="#c08850"/><ellipse cx="1446" cy="1002" rx="3.2" ry="4.4" fill="#fff"/><path d="M1434.8,1014 l5.6,-2 l2.6,10.5 l2.6,-10 l3.6,0.4 l1.6,9.6 l3.6,-10.6 l4.4,1.8 l-5.6,18 l-5,0.6 l-1.6,-8 l-2.6,8.6 l-5,-0.4z" fill="#ffee58" stroke="#d8b820" stroke-width="0.9"/></svg>
<svg class="abs" style="left:0;top:0" width="1920" height="1048" viewBox="0 0 1920 1048"><defs><linearGradient id="lgt" gradientUnits="userSpaceOnUse" x1="0" y1="513.75" x2="0" y2="530.25"><stop offset="0" stop-color="#fbb02a"/><stop offset="1" stop-color="#f0701c"/></linearGradient></defs><text x="946.7" y="528.6" font-family="'Liberation Sans','Noto Sans CJK SC',sans-serif" font-size="16.5" font-weight="500" fill="url(#lgt)">智造资料网</text></svg>
<svg class="abs" style="left:0;top:0" width="1920" height="1048" viewBox="0 0 1920 1048"><text transform="translate(947 538.1) skewX(-8)" x="0" y="0" font-family="'Liberation Sans',sans-serif" font-size="5.3" font-weight="bold" fill="#f58a1e" textLength="82.2" lengthAdjust="spacingAndGlyphs">INTELLIGENT MANUFACTURING DATA</text></svg>
</body></html>
